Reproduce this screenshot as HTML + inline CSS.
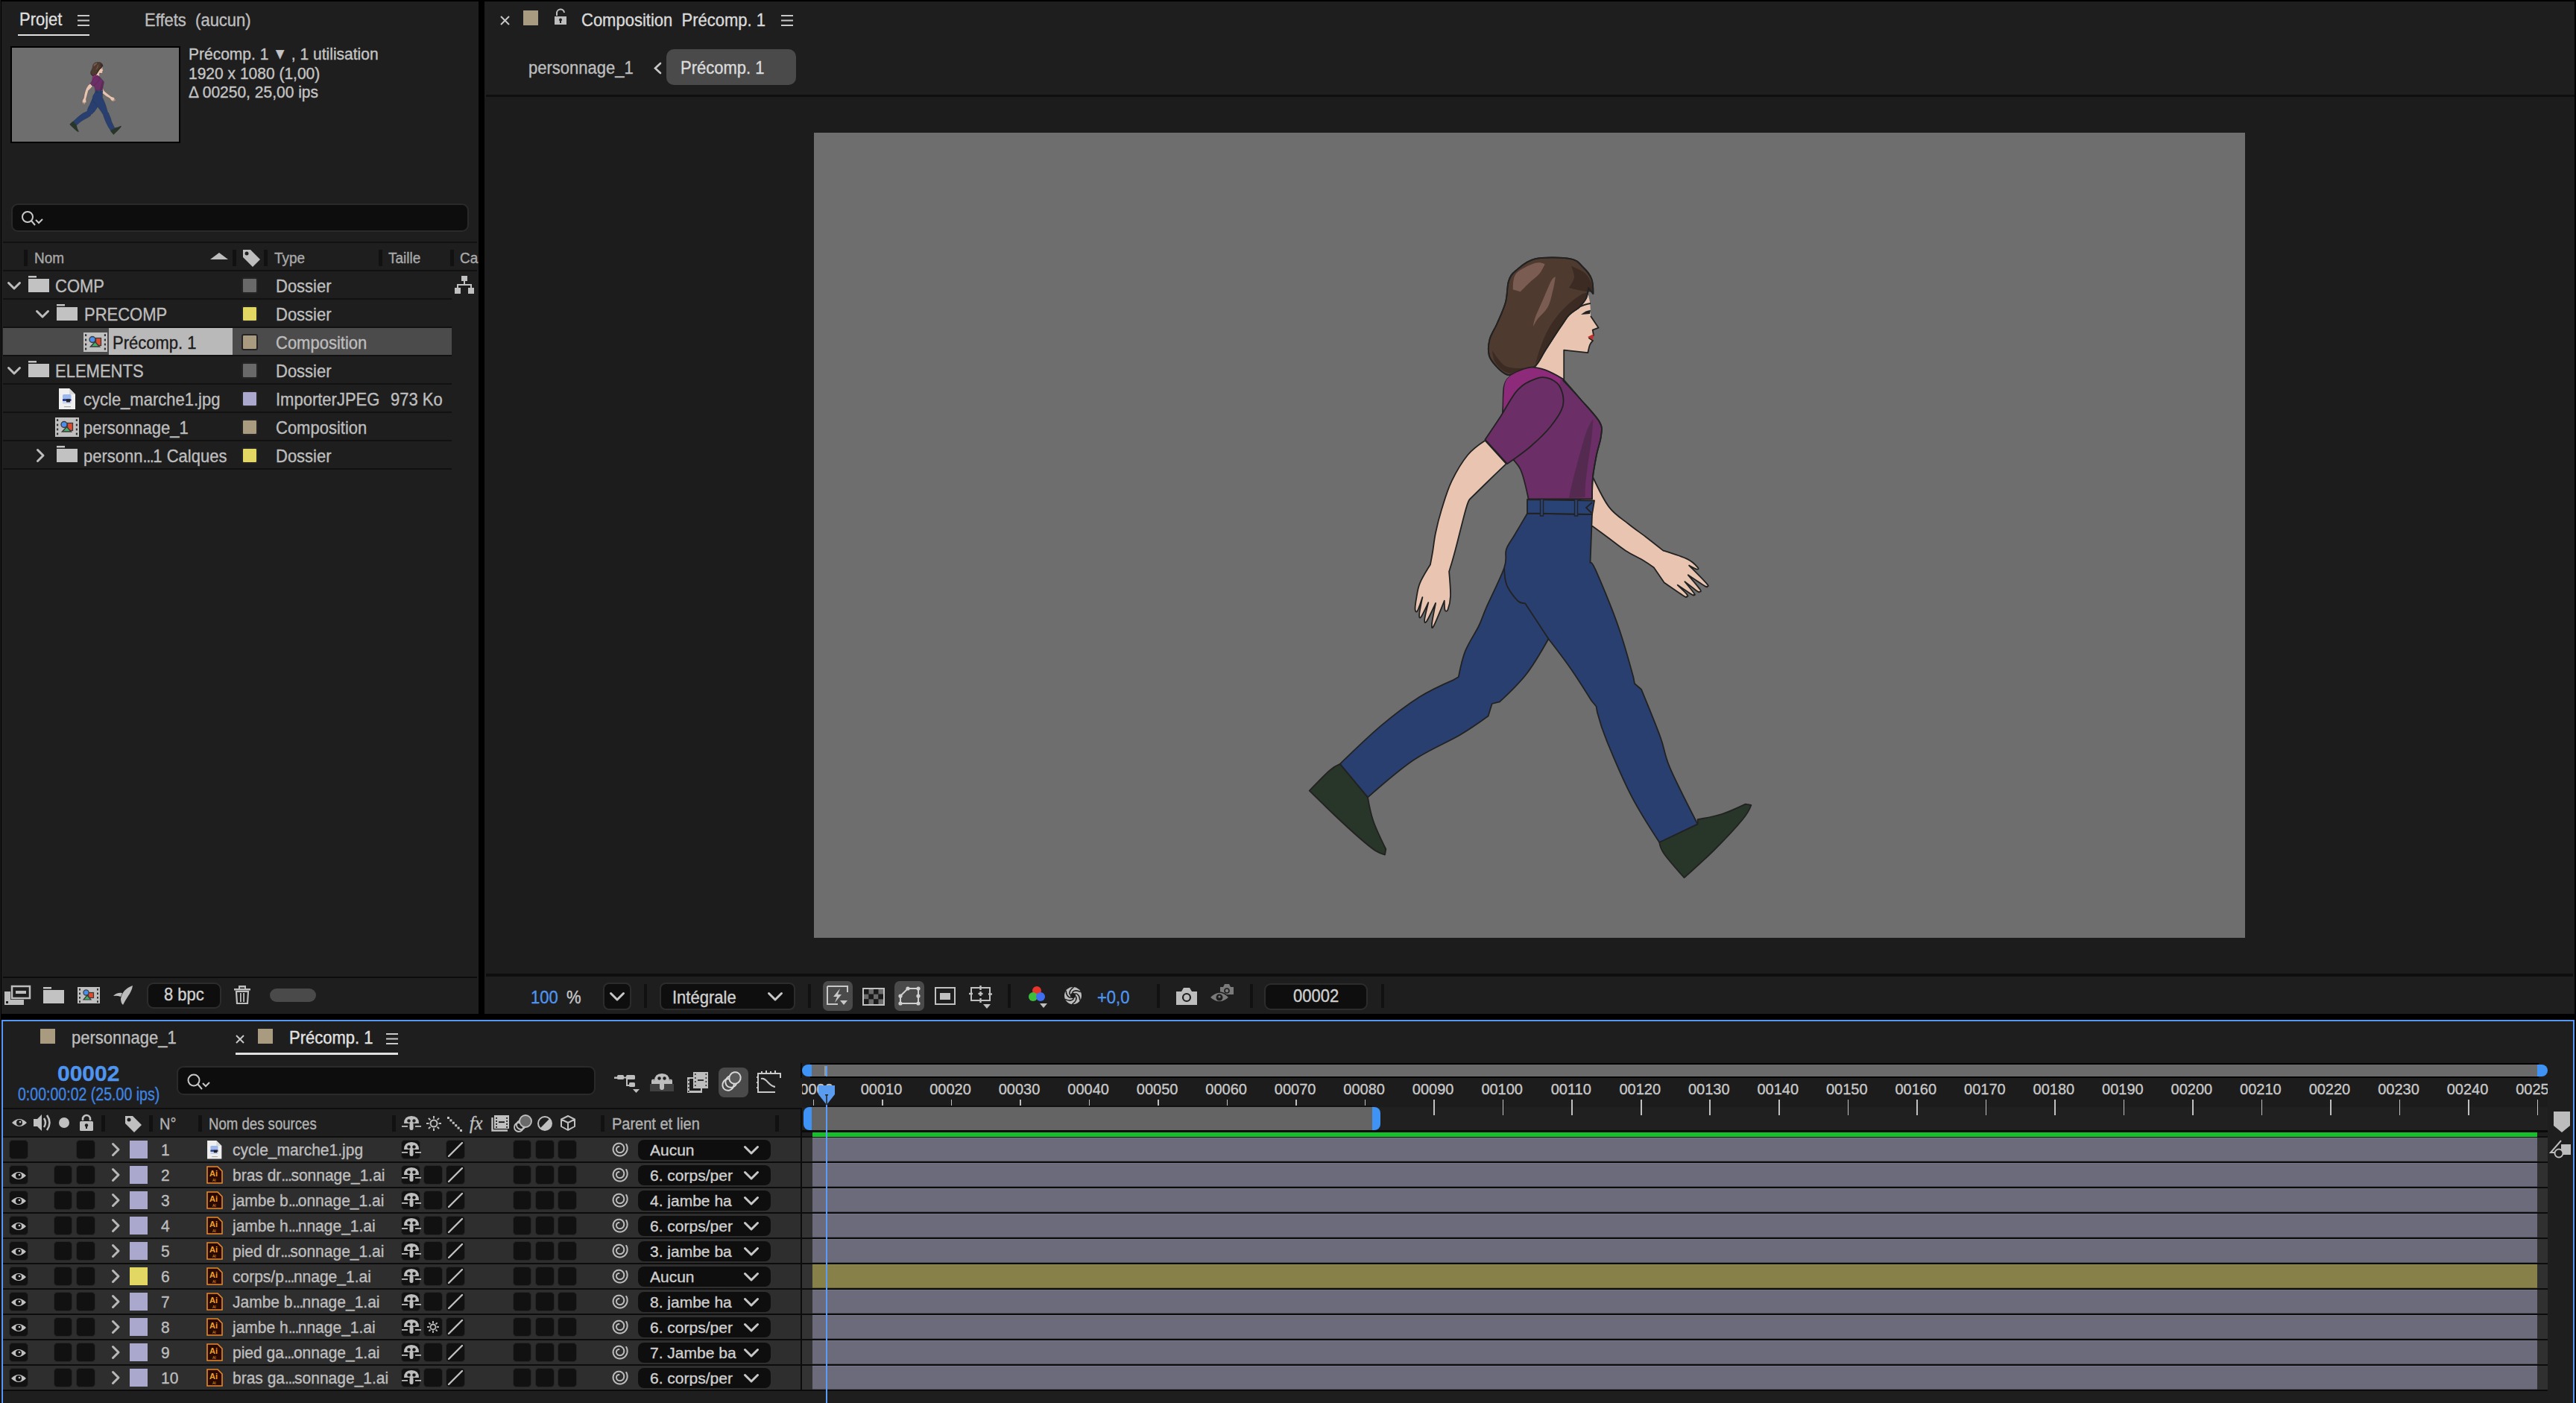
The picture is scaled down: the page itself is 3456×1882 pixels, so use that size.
<!DOCTYPE html>
<html><head><meta charset="utf-8">
<style>
*{margin:0;padding:0;box-sizing:border-box}
html,body{width:3456px;height:1882px;overflow:hidden;background:#000;font-family:"Liberation Sans",sans-serif}
.a{position:absolute}
.t{position:absolute;white-space:nowrap;line-height:1;color:#bdbdbd;font-size:22px;-webkit-text-stroke:0.35px currentColor}
svg{position:absolute;overflow:visible}
</style></head><body>

<div class="a" style="left:0px;top:0px;width:1px;height:1882px;background:#1c1c1c;"></div>
<div class="a" style="left:2px;top:2px;width:640px;height:1358px;background:#1e1e1e;"></div>
<div class="t" style="left:26px;top:16.38px;font-size:22px;color:#dedede;transform:scale(1.0,1.08);transform-origin:0 18.62px;">Projet</div>
<svg style="left:104px;top:20px" width="16" height="16" viewBox="0 0 16 16"><g stroke="#c8c8c8" stroke-width="2"><line x1="0" y1="1" x2="16" y2="1"/><line x1="0" y1="7.5" x2="16" y2="7.5"/><line x1="0" y1="14" x2="16" y2="14"/></g></svg>
<div class="a" style="left:24px;top:46px;width:96px;height:2px;background:#e0e0e0;"></div>
<div class="t" style="left:194px;top:17.38px;font-size:22px;color:#bdbdbd;transform:scale(1.0,1.08);transform-origin:0 18.62px;">Effets&nbsp; (aucun)</div>
<div class="a" style="left:14px;top:62px;width:228px;height:130px;background:#000;"></div>
<div class="a" style="left:16px;top:64px;width:224px;height:126px;background:#6e6e6e;"></div>
<svg style="left:16px;top:64px;overflow:hidden" width="224" height="126" viewBox="1092 178 1920 1080" preserveAspectRatio="none"><use href="#figg"/></svg>
<div class="t" style="left:253px;top:62.22px;font-size:21px;color:#c4c4c4;transform:scale(1.0,1.08);transform-origin:0 17.78px;">Précomp. 1 <span style="font-size:19px;position:relative;top:-1px">&#9660;</span> , 1 utilisation</div>
<div class="t" style="left:253px;top:87.72px;font-size:21px;color:#c4c4c4;transform:scale(1.0,1.08);transform-origin:0 17.78px;">1920 x 1080 (1,00)</div>
<div class="t" style="left:253px;top:113.22px;font-size:21px;color:#c4c4c4;transform:scale(1.0,1.08);transform-origin:0 17.78px;">&Delta; 00250, 25,00 ips</div>
<div class="a" style="left:15px;top:273px;width:614px;height:38px;background:#0d0d0d;border:2px solid #2a2a2a;border-radius:9px"></div>
<svg style="left:28px;top:282px" width="32" height="22" viewBox="0 0 32 22"><circle cx="9" cy="9" r="7" fill="none" stroke="#c8c8c8" stroke-width="2"/><line x1="14" y1="14" x2="19" y2="20" stroke="#c8c8c8" stroke-width="2"/><polyline points="20,13 24,17 29,12" fill="none" stroke="#c8c8c8" stroke-width="2"/></svg>
<div class="a" style="left:4px;top:324px;width:636px;height:2px;background:#111;"></div>
<div class="a" style="left:32px;top:335px;width:5px;height:22px;background:#111;"></div>
<div class="a" style="left:312px;top:335px;width:5px;height:22px;background:#111;"></div>
<div class="a" style="left:354px;top:335px;width:5px;height:22px;background:#111;"></div>
<div class="a" style="left:508px;top:335px;width:5px;height:22px;background:#111;"></div>
<div class="a" style="left:604px;top:335px;width:5px;height:22px;background:#111;"></div>
<div class="t" style="left:46px;top:336.92px;font-size:19px;color:#a9a9a9;transform:scale(1.0,1.08);transform-origin:0 16.08px;">Nom</div>
<svg style="left:282px;top:339px" width="24" height="9" viewBox="0 0 24 9"><polygon points="0,9 12,0 24,9" fill="#bdbdbd"/></svg>
<svg style="left:325px;top:334px" width="25" height="25" viewBox="0 0 25 25"><path d="M1 1 L11 1 L24 14 L14 24 L1 11 Z" fill="#bdbdbd"/><circle cx="6" cy="6" r="2.5" fill="#1e1e1e"/></svg>
<div class="t" style="left:368px;top:336.92px;font-size:19px;color:#a9a9a9;transform:scale(1.0,1.08);transform-origin:0 16.08px;">Type</div>
<div class="t" style="left:521px;top:336.92px;font-size:19px;color:#a9a9a9;transform:scale(1.0,1.08);transform-origin:0 16.08px;">Taille</div>
<div class="t" style="left:617px;top:336.92px;font-size:19px;color:#a9a9a9;transform:scale(1.0,1.08);transform-origin:0 16.08px;">Ca</div>
<div class="a" style="left:4px;top:362px;width:636px;height:2px;background:#111;"></div>
<svg style="left:10px;top:377.8px" width="18" height="10" viewBox="0 0 18 10"><polyline points="1.5,1.5 9.0,9 16.5,1.5" fill="none" stroke="#bdbdbd" stroke-width="3" stroke-linecap="round" stroke-linejoin="round"/></svg>
<svg style="left:38px;top:369.8px" width="28" height="22" viewBox="0 0 28 22"><rect x="0" y="0" width="11" height="2.5" fill="#c2c2c2"/><rect x="0" y="4" width="28" height="18" fill="#c2c2c2"/></svg>
<div class="t" style="left:74px;top:373.68px;font-size:22px;color:#bdbdbd;transform:scale(1.0,1.08);transform-origin:0 18.62px;">COMP</div>
<div class="a" style="left:324px;top:371.8px;width:22px;height:22px;background:#696969;border:2px solid #242424;border-radius:3px"></div>
<div class="t" style="left:370px;top:373.68px;font-size:22px;color:#bdbdbd;transform:scale(1.0,1.08);transform-origin:0 18.62px;">Dossier</div>
<div class="a" style="left:4px;top:399.8px;width:602px;height:2px;background:#111;"></div>
<svg style="left:48px;top:415.90000000000003px" width="18" height="10" viewBox="0 0 18 10"><polyline points="1.5,1.5 9.0,9 16.5,1.5" fill="none" stroke="#bdbdbd" stroke-width="3" stroke-linecap="round" stroke-linejoin="round"/></svg>
<svg style="left:76px;top:407.90000000000003px" width="28" height="22" viewBox="0 0 28 22"><rect x="0" y="0" width="11" height="2.5" fill="#c2c2c2"/><rect x="0" y="4" width="28" height="18" fill="#c2c2c2"/></svg>
<div class="t" style="left:113px;top:411.78px;font-size:22px;color:#bdbdbd;transform:scale(1.0,1.08);transform-origin:0 18.62px;">PRECOMP</div>
<div class="a" style="left:324px;top:409.90000000000003px;width:22px;height:22px;background:#e2d763;border:2px solid #242424;border-radius:3px"></div>
<div class="t" style="left:370px;top:411.78px;font-size:22px;color:#bdbdbd;transform:scale(1.0,1.08);transform-origin:0 18.62px;">Dossier</div>
<div class="a" style="left:4px;top:437.90000000000003px;width:602px;height:2px;background:#111;"></div>
<div class="a" style="left:4px;top:440px;width:602px;height:36px;background:#4b4b4b;"></div>
<div class="a" style="left:146px;top:440px;width:166px;height:36px;background:#b9b9b9;"></div>
<svg style="left:112px;top:446.0px" width="32" height="26" viewBox="0 0 32 26"><rect x="0" y="0" width="32" height="26" fill="#c0c0c0"/><rect x="2" y="2.2" width="2.2" height="2.8" fill="#333"/><rect x="27.8" y="2.2" width="2.2" height="2.8" fill="#333"/><rect x="2" y="8.6" width="2.2" height="2.8" fill="#333"/><rect x="27.8" y="8.6" width="2.2" height="2.8" fill="#333"/><rect x="2" y="14.6" width="2.2" height="2.8" fill="#333"/><rect x="27.8" y="14.6" width="2.2" height="2.8" fill="#333"/><rect x="2" y="20.6" width="2.2" height="2.8" fill="#333"/><rect x="27.8" y="20.6" width="2.2" height="2.8" fill="#333"/><rect x="16.5" y="7.5" width="7" height="10" fill="#e04a2f" stroke="#3a3a3a" stroke-width="1.3"/><circle cx="12" cy="9.5" r="4" fill="#4a8ef0" stroke="#3a3a3a" stroke-width="1.4"/><polygon points="9.5,19 15.5,12.5 21.5,19" fill="#44b06a" stroke="#3a3a3a" stroke-width="1.4"/></svg>
<div class="t" style="left:151px;top:449.88px;font-size:22px;color:#1c1c1c;transform:scale(1.0,1.08);transform-origin:0 18.62px;">Précomp. 1</div>
<div class="a" style="left:324px;top:448.0px;width:22px;height:22px;background:#a99b7f;border:2px solid #242424;border-radius:3px"></div>
<div class="t" style="left:370px;top:449.88px;font-size:22px;color:#bdbdbd;transform:scale(1.0,1.08);transform-origin:0 18.62px;">Composition</div>
<div class="a" style="left:4px;top:476.0px;width:602px;height:2px;background:#111;"></div>
<svg style="left:10px;top:492.1px" width="18" height="10" viewBox="0 0 18 10"><polyline points="1.5,1.5 9.0,9 16.5,1.5" fill="none" stroke="#bdbdbd" stroke-width="3" stroke-linecap="round" stroke-linejoin="round"/></svg>
<svg style="left:38px;top:484.1px" width="28" height="22" viewBox="0 0 28 22"><rect x="0" y="0" width="11" height="2.5" fill="#c2c2c2"/><rect x="0" y="4" width="28" height="18" fill="#c2c2c2"/></svg>
<div class="t" style="left:74px;top:487.98px;font-size:22px;color:#bdbdbd;transform:scale(1.0,1.08);transform-origin:0 18.62px;">ELEMENTS</div>
<div class="a" style="left:324px;top:486.1px;width:22px;height:22px;background:#696969;border:2px solid #242424;border-radius:3px"></div>
<div class="t" style="left:370px;top:487.98px;font-size:22px;color:#bdbdbd;transform:scale(1.0,1.08);transform-origin:0 18.62px;">Dossier</div>
<div class="a" style="left:4px;top:514.1px;width:602px;height:2px;background:#111;"></div>
<svg style="left:79px;top:521.2px" width="22.0" height="28.0" viewBox="0 0 22 28"><path d="M0 0 H14 L22 8 V28 H0 Z" fill="#efefef"/><path d="M14 0 V8 H22" fill="#d8d8d8"/><rect x="5" y="8" width="11.5" height="6" rx="1.5" fill="#9bb8ee"/><rect x="5" y="14" width="11.5" height="3" fill="#2d3f8a"/><rect x="5" y="17" width="11.5" height="3.5" fill="#c9d6ee"/><rect x="10" y="14.5" width="5" height="4" fill="#222"/><rect x="7" y="24" width="9" height="1.2" fill="#aaa"/></svg>
<div class="t" style="left:112px;top:526.08px;font-size:22px;color:#bdbdbd;transform:scale(1.0,1.08);transform-origin:0 18.62px;">cycle_marche1.jpg</div>
<div class="a" style="left:324px;top:524.2px;width:22px;height:22px;background:#aaa8cc;border:2px solid #242424;border-radius:3px"></div>
<div class="t" style="left:370px;top:526.08px;font-size:22px;color:#bdbdbd;transform:scale(1.0,1.08);transform-origin:0 18.62px;">ImporterJPEG</div>
<div class="t" style="left:524px;top:526.08px;font-size:22px;color:#bdbdbd;transform:scale(1.0,1.08);transform-origin:0 18.62px;">973 Ko</div>
<div class="a" style="left:4px;top:552.2px;width:602px;height:2px;background:#111;"></div>
<svg style="left:74px;top:560.3px" width="32" height="26" viewBox="0 0 32 26"><rect x="0" y="0" width="32" height="26" fill="#c0c0c0"/><rect x="2" y="2.2" width="2.2" height="2.8" fill="#333"/><rect x="27.8" y="2.2" width="2.2" height="2.8" fill="#333"/><rect x="2" y="8.6" width="2.2" height="2.8" fill="#333"/><rect x="27.8" y="8.6" width="2.2" height="2.8" fill="#333"/><rect x="2" y="14.6" width="2.2" height="2.8" fill="#333"/><rect x="27.8" y="14.6" width="2.2" height="2.8" fill="#333"/><rect x="2" y="20.6" width="2.2" height="2.8" fill="#333"/><rect x="27.8" y="20.6" width="2.2" height="2.8" fill="#333"/><rect x="16.5" y="7.5" width="7" height="10" fill="#e04a2f" stroke="#3a3a3a" stroke-width="1.3"/><circle cx="12" cy="9.5" r="4" fill="#4a8ef0" stroke="#3a3a3a" stroke-width="1.4"/><polygon points="9.5,19 15.5,12.5 21.5,19" fill="#44b06a" stroke="#3a3a3a" stroke-width="1.4"/></svg>
<div class="t" style="left:112px;top:564.18px;font-size:22px;color:#bdbdbd;transform:scale(1.0,1.08);transform-origin:0 18.62px;">personnage_1</div>
<div class="a" style="left:324px;top:562.3px;width:22px;height:22px;background:#a99b7f;border:2px solid #242424;border-radius:3px"></div>
<div class="t" style="left:370px;top:564.18px;font-size:22px;color:#bdbdbd;transform:scale(1.0,1.08);transform-origin:0 18.62px;">Composition</div>
<div class="a" style="left:4px;top:590.3px;width:602px;height:2px;background:#111;"></div>
<svg style="left:49px;top:602.4000000000001px" width="10" height="18" viewBox="0 0 10 18"><polyline points="1.5,1.5 9,9.0 1.5,16.5" fill="none" stroke="#bdbdbd" stroke-width="3" stroke-linecap="round" stroke-linejoin="round"/></svg>
<svg style="left:76px;top:598.4000000000001px" width="28" height="22" viewBox="0 0 28 22"><rect x="0" y="0" width="11" height="2.5" fill="#c2c2c2"/><rect x="0" y="4" width="28" height="18" fill="#c2c2c2"/></svg>
<div class="t" style="left:112px;top:602.28px;font-size:22px;color:#bdbdbd;transform:scale(1.0,1.08);transform-origin:0 18.62px;">personn<span style="letter-spacing:-1.5px">...</span>1 Calques</div>
<div class="a" style="left:324px;top:600.4000000000001px;width:22px;height:22px;background:#e2d763;border:2px solid #242424;border-radius:3px"></div>
<div class="t" style="left:370px;top:602.28px;font-size:22px;color:#bdbdbd;transform:scale(1.0,1.08);transform-origin:0 18.62px;">Dossier</div>
<div class="a" style="left:4px;top:628.4000000000001px;width:602px;height:2px;background:#111;"></div>
<svg style="left:610px;top:370px" width="26" height="24" viewBox="0 0 26 24"><rect x="9" y="0" width="8" height="7" fill="#c0c0c0"/><rect x="12" y="7" width="2" height="5" fill="#c0c0c0"/><rect x="3" y="11" width="20" height="2" fill="#c0c0c0"/><rect x="3" y="11" width="2" height="5" fill="#c0c0c0"/><rect x="21" y="11" width="2" height="5" fill="#c0c0c0"/><rect x="0" y="16" width="8" height="8" fill="#c0c0c0"/><rect x="18" y="16" width="8" height="8" fill="#c0c0c0"/></svg>
<div class="a" style="left:4px;top:1310px;width:636px;height:2px;background:#0c0c0c;"></div>
<svg style="left:6px;top:1322px" width="35" height="27" viewBox="0 0 35 27"><rect x="10" y="1" width="24" height="16" fill="none" stroke="#bdbdbd" stroke-width="2.5"/><rect x="15" y="7" width="14" height="4" fill="#bdbdbd"/><path d="M0 8 H8 V19 H26 V26 H0 Z" fill="#bdbdbd"/><rect x="2" y="21" width="3" height="3" fill="#1e1e1e"/></svg>
<svg style="left:58px;top:1324px" width="28" height="22" viewBox="0 0 28 22"><rect x="0" y="0" width="11" height="2.5" fill="#c2c2c2"/><rect x="0" y="4" width="28" height="18" fill="#c2c2c2"/></svg>
<svg style="left:104px;top:1324px" width="30" height="22" viewBox="0 0 30 22"><rect x="0" y="0" width="30" height="22" fill="#c0c0c0"/><rect x="2" y="2" width="2" height="2.6" fill="#333"/><rect x="26" y="2" width="2" height="2.6" fill="#333"/><rect x="2" y="7.5" width="2" height="2.6" fill="#333"/><rect x="26" y="7.5" width="2" height="2.6" fill="#333"/><rect x="2" y="13" width="2" height="2.6" fill="#333"/><rect x="26" y="13" width="2" height="2.6" fill="#333"/><rect x="2" y="18.3" width="2" height="2.6" fill="#333"/><rect x="26" y="18.3" width="2" height="2.6" fill="#333"/><rect x="6" y="2" width="18" height="18" fill="#c0c0c0"/><rect x="14.5" y="7.5" width="7" height="7" fill="#e04a2f" stroke="#3a3a3a" stroke-width="1.2"/><circle cx="11.5" cy="7.5" r="3.6" fill="#4a8ef0" stroke="#3a3a3a" stroke-width="1.2"/><polygon points="8,17 13,11 18,17" fill="#44b06a" stroke="#3a3a3a" stroke-width="1.2"/></svg>
<svg style="left:152px;top:1322px" width="26" height="26" viewBox="0 0 26 26"><path d="M26 0 Q12 5 10 18 Q10 23 13 26 Q16 20 20 14 Q25 7 26 0 Z" fill="#bdbdbd"/><path d="M0 14 Q5 9 12 10 L10 15 Q5 13 0 14 Z" fill="#bdbdbd"/></svg>
<div class="a" style="left:197px;top:1318px;width:100px;height:35px;background:#0e0e0e;border:2px solid #2c2c2c;border-radius:9px"></div>
<div class="t" style="left:220px;top:1324.38px;font-size:22px;color:#cfcfcf;transform:scale(1.0,1.08);transform-origin:0 18.62px;">8 bpc</div>
<svg style="left:314px;top:1322px" width="22" height="25" viewBox="0 0 22 25"><rect x="0" y="4" width="22" height="2.5" fill="#bdbdbd"/><rect x="7" y="0" width="8" height="2.5" fill="#bdbdbd"/><rect x="6" y="0" width="2" height="5" fill="#bdbdbd"/><rect x="14" y="0" width="2" height="5" fill="#bdbdbd"/><path d="M3 8 H19 L18 24 H4 Z" fill="none" stroke="#bdbdbd" stroke-width="2.2"/><rect x="8" y="10" width="1.8" height="12" fill="#bdbdbd"/><rect x="12.2" y="10" width="1.8" height="12" fill="#bdbdbd"/></svg>
<div class="a" style="left:362px;top:1326px;width:62px;height:18px;background:#4a4a4a;border-radius:9px"></div>
<div class="a" style="left:650px;top:2px;width:2804px;height:1358px;background:#1e1e1e;"></div>
<svg style="left:672px;top:22px" width="11" height="11" viewBox="0 0 11 11"><g stroke="#c8c8c8" stroke-width="2"><line x1="0" y1="0" x2="11" y2="11"/><line x1="11" y1="0" x2="0" y2="11"/></g></svg>
<div class="a" style="left:702px;top:14px;width:20px;height:20px;background:#a99b7f;"></div>
<svg style="left:744px;top:13px" width="17" height="20" viewBox="0 0 17 20"><path d="M3 8 V5 A5 5 0 0 1 13 4" fill="none" stroke="#bdbdbd" stroke-width="2"/><rect x="0" y="9" width="16" height="11" fill="#bdbdbd"/><circle cx="8" cy="13.5" r="2" fill="#1e1e1e"/><rect x="7" y="14" width="2" height="4" fill="#1e1e1e"/></svg>
<div class="t" style="left:780px;top:17.38px;font-size:22px;color:#dadada;transform:scale(1.0,1.08);transform-origin:0 18.62px;">Composition&nbsp; Précomp. 1</div>
<svg style="left:1048px;top:20px" width="16" height="16" viewBox="0 0 16 16"><g stroke="#c8c8c8" stroke-width="2"><line x1="0" y1="1" x2="16" y2="1"/><line x1="0" y1="7.5" x2="16" y2="7.5"/><line x1="0" y1="14" x2="16" y2="14"/></g></svg>
<div class="t" style="left:709px;top:81.38px;font-size:22px;color:#bdbdbd;transform:scale(1.0,1.08);transform-origin:0 18.62px;">personnage_1</div>
<svg style="left:877px;top:84px" width="11" height="15" viewBox="0 0 11 15"><polyline points="9,1 2,7.5 9,14" fill="none" stroke="#c8c8c8" stroke-width="2.6" stroke-linecap="round"/></svg>
<div class="a" style="left:894px;top:66px;width:174px;height:48px;background:#4a4a4a;border-radius:10px"></div>
<div class="t" style="left:913px;top:81.38px;font-size:22px;color:#dcdcdc;transform:scale(1.0,1.08);transform-origin:0 18.62px;">Précomp. 1</div>
<div class="a" style="left:652px;top:127px;width:2802px;height:3px;background:#0f0f0f;"></div>
<div class="a" style="left:650px;top:130px;width:2804px;height:1176px;background:#1c1c1c;"></div>
<div class="a" style="left:1092px;top:178px;width:1920px;height:1080px;background:#6e6e6e;"></div>
<svg style="left:1092px;top:178px;overflow:hidden" width="1920" height="1080" viewBox="1092 178 1920 1080"><g id="figg"><path d="M2120.0 630.0 C2120.0 630.0 2137.0 640.0 2137.0 640.0 C2137.0 640.0 2150.9 669.9 2158.9 680.4 C2166.9 690.9 2176.9 696.4 2185.0 703.0 C2193.1 709.6 2200.0 714.1 2207.7 720.0 C2215.4 725.9 2231.4 738.6 2231.4 738.6 C2231.4 738.6 2233.4 739.2 2233.4 739.2 C2233.4 739.2 2256.7 746.5 2264.1 750.1 C2271.5 753.7 2275.6 758.8 2277.6 761.0 C2279.6 763.2 2278.2 764.0 2276.3 763.6 C2274.4 763.2 2266.1 758.5 2266.1 758.5 C2266.1 758.5 2285.8 778.2 2289.8 782.9 C2293.9 787.5 2290.8 785.9 2290.4 786.4 C2290.0 786.9 2291.5 788.6 2287.2 786.1 C2282.9 783.6 2264.8 771.3 2264.8 771.3 C2264.8 771.3 2278.2 786.9 2280.8 790.6 C2283.4 794.4 2280.8 793.4 2280.2 793.8 C2279.6 794.2 2280.3 795.4 2277.0 793.1 C2273.7 790.9 2260.3 780.3 2260.3 780.3 C2260.3 780.3 2271.1 793.4 2273.1 796.3 C2275.1 799.2 2273.0 797.7 2272.5 797.9 C2272.0 798.1 2273.5 799.8 2269.9 797.6 C2266.3 795.4 2250.7 784.8 2250.7 784.8 C2250.7 784.8 2261.5 795.0 2263.5 797.6 C2265.5 800.2 2263.7 799.9 2262.9 800.2 C2262.2 800.5 2264.0 802.6 2259.0 799.5 C2254.0 796.4 2232.7 781.6 2232.7 781.6 C2232.7 781.6 2218.8 761.2 2218.8 761.2 C2218.8 761.2 2211.3 755.8 2205.0 752.0 C2198.7 748.2 2188.8 743.7 2181.0 738.7 C2173.2 733.7 2165.9 727.5 2158.5 722.0 C2151.1 716.5 2136.7 706.0 2136.7 706.0 C2136.7 706.0 2120.0 704.0 2120.0 704.0 C2120.0 704.0 2120.0 630.0 2120.0 630.0Z" fill="#e9c5b1" stroke="#222" stroke-width="1.8" stroke-linejoin="round"/><path d="M2049.2 688.5 C2049.2 688.5 2036.3 710.2 2031.6 718.3 C2026.9 726.4 2023.0 730.0 2020.8 737.2 C2018.5 744.4 2022.6 748.5 2018.1 761.6 C2013.6 774.7 1999.4 802.7 1993.7 815.8 C1988.0 828.9 1988.5 830.4 1983.8 840.0 C1979.1 849.6 1970.3 862.1 1965.8 873.4 C1961.3 884.7 1956.8 908.0 1956.8 908.0 C1956.8 908.0 1950.4 911.8 1950.4 911.8 C1950.4 911.8 1920.5 924.7 1904.2 935.0 C1888.0 945.3 1870.7 958.4 1852.9 973.4 C1835.2 988.4 1797.7 1024.8 1797.7 1024.8 C1797.7 1024.8 1835.0 1069.7 1835.0 1069.7 C1835.0 1069.7 1876.0 1033.5 1896.5 1019.6 C1917.0 1005.7 1941.4 996.1 1958.1 986.3 C1974.8 976.5 1996.6 960.6 1996.6 960.6 C1996.6 960.6 2001.7 944.0 2001.7 944.0 C2001.7 944.0 2012.0 941.4 2012.0 941.4 C2012.0 941.4 2037.1 918.1 2048.0 904.0 C2058.9 889.9 2077.5 857.0 2077.5 857.0 C2077.5 857.0 2097.4 882.7 2107.0 896.5 C2116.6 910.3 2135.2 940.0 2135.2 940.0 C2135.2 940.0 2141.6 947.8 2141.6 947.8 C2141.6 947.8 2142.9 955.5 2142.9 955.5 C2142.9 955.5 2148.0 975.2 2155.7 994.0 C2163.4 1012.8 2177.2 1045.7 2189.0 1068.4 C2200.8 1091.1 2226.3 1130.0 2226.3 1130.0 C2226.3 1130.0 2277.6 1105.6 2277.6 1105.6 C2277.6 1105.6 2248.7 1049.4 2240.4 1029.9 C2232.1 1010.4 2234.0 1006.3 2227.6 988.8 C2221.2 971.3 2202.0 924.7 2202.0 924.7 C2202.0 924.7 2193.0 917.0 2193.0 917.0 C2193.0 917.0 2191.6 909.3 2191.6 909.3 C2191.6 909.3 2179.4 863.9 2171.0 840.0 C2162.6 816.1 2147.4 779.9 2141.2 765.7 C2134.9 751.5 2133.5 754.8 2133.5 754.8 C2133.5 754.8 2136.0 690.0 2136.0 690.0 C2136.0 690.0 2049.2 688.5 2049.2 688.5Z" fill="#283f70" stroke="#222" stroke-width="1.8" stroke-linejoin="round"/><path d="M2018.1 761.6 C2018.1 761.6 2018.5 777.4 2021.5 784.8 C2024.5 792.2 2032.2 801.9 2036.3 806.0 C2040.4 810.1 2046.1 809.3 2046.1 809.3 C2046.1 809.3 2077.5 857.0 2077.5 857.0" fill="none" stroke="#222" stroke-width="1.8" stroke-linejoin="round"/><path d="M1797.7 1024.8 C1797.7 1024.8 1790.4 1027.7 1783.6 1033.7 C1776.8 1039.7 1756.7 1060.7 1756.7 1060.7 C1756.7 1060.7 1778.7 1082.3 1790.0 1093.0 C1801.3 1103.7 1815.5 1116.8 1824.7 1124.8 C1833.9 1132.8 1839.5 1137.4 1845.0 1141.0 C1850.5 1144.6 1858.0 1146.6 1858.0 1146.6 C1858.0 1146.6 1859.3 1139.0 1859.3 1139.0 C1859.3 1139.0 1846.6 1113.2 1842.6 1101.7 C1838.5 1090.2 1835.0 1069.7 1835.0 1069.7 C1835.0 1069.7 1797.7 1024.8 1797.7 1024.8Z" fill="#283629" stroke="#222" stroke-width="1.8" stroke-linejoin="round"/><path d="M2226.3 1130.0 C2226.3 1130.0 2227.1 1137.5 2232.7 1145.4 C2238.2 1153.3 2259.6 1177.4 2259.6 1177.4 C2259.6 1177.4 2286.9 1153.0 2300.0 1140.0 C2313.1 1127.0 2329.7 1109.2 2337.9 1099.2 C2346.1 1089.2 2349.4 1080.0 2349.4 1080.0 C2349.4 1080.0 2341.7 1078.6 2341.7 1078.6 C2341.7 1078.6 2320.7 1088.6 2310.0 1092.0 C2299.3 1095.4 2277.6 1099.2 2277.6 1099.2 C2277.6 1099.2 2277.6 1105.6 2277.6 1105.6 C2277.6 1105.6 2226.3 1130.0 2226.3 1130.0Z" fill="#283629" stroke="#222" stroke-width="1.8" stroke-linejoin="round"/><path d="M2048.0 512.0 C2048.0 512.0 2046.7 499.5 2052.0 490.0 C2057.3 480.5 2071.2 468.3 2080.0 455.0 C2088.8 441.7 2097.0 421.7 2105.0 410.0 C2113.0 398.3 2128.0 385.0 2128.0 385.0 C2128.0 385.0 2132.0 398.5 2133.0 405.0 C2134.0 411.5 2134.0 424.0 2134.0 424.0 C2134.0 424.0 2144.6 439.7 2144.6 439.7 C2144.6 439.7 2136.7 442.6 2136.7 442.6 C2136.7 442.6 2138.0 449.7 2138.0 449.7 C2138.0 449.7 2132.0 453.5 2132.0 453.5 C2132.0 453.5 2137.0 457.0 2137.0 457.0 C2137.0 457.0 2134.1 459.8 2133.0 462.5 C2131.9 465.2 2130.3 473.2 2130.3 473.2 C2130.3 473.2 2098.2 469.6 2098.2 469.6 C2098.2 469.6 2098.2 512.0 2098.2 512.0 C2098.2 512.0 2048.0 512.0 2048.0 512.0Z" fill="#e9c5b1" stroke="none"/><path d="M2134.0 424.0 C2134.0 424.0 2144.6 439.7 2144.6 439.7 C2144.6 439.7 2136.7 442.6 2136.7 442.6 C2136.7 442.6 2138.0 449.7 2138.0 449.7 C2138.0 449.7 2132.0 453.5 2132.0 453.5 C2132.0 453.5 2137.0 457.0 2137.0 457.0 C2137.0 457.0 2134.1 459.8 2133.0 462.5 C2131.9 465.2 2130.3 473.2 2130.3 473.2 C2130.3 473.2 2098.2 469.6 2098.2 469.6 C2098.2 469.6 2098.2 512.0 2098.2 512.0" fill="none" stroke="#222" stroke-width="1.8" stroke-linejoin="round"/><path d="M2116 413 Q2126 408 2134 407" fill="none" stroke="#222" stroke-width="2"/><path d="M2121 422 Q2128 416 2134 416 L2133 421 Z" fill="#222"/><path d="M2130 452 L2138 448 L2137 456 Z" fill="#c0302a"/><path d="M2059.8 347.1 C2071.9 344.5 2096.1 345.2 2106.8 347.1 C2117.5 349.0 2119.2 354.0 2123.9 358.5 C2128.7 363.0 2133.1 368.3 2135.3 374.2 C2137.6 380.1 2137.4 394.1 2137.4 394.1 C2137.4 394.1 2131.0 386.0 2131.0 386.0 C2131.0 386.0 2130.2 395.5 2128.0 400.0 C2125.8 404.5 2118.0 413.0 2118.0 413.0 C2118.0 413.0 2108.5 419.1 2105.0 422.6 C2101.5 426.1 2100.1 429.3 2096.8 434.0 C2093.5 438.7 2089.4 444.8 2085.4 451.0 C2081.4 457.2 2077.1 464.1 2072.6 471.0 C2068.1 477.9 2064.7 487.4 2058.3 492.4 C2051.9 497.4 2040.2 499.3 2034.0 501.0 C2027.8 502.7 2025.8 504.1 2021.3 502.4 C2016.8 500.7 2010.9 495.3 2007.0 491.0 C2003.1 486.7 1999.2 482.7 1997.8 476.8 C1996.4 470.9 1996.7 462.5 1998.5 455.4 C2000.3 448.3 2004.9 442.3 2008.5 434.0 C2012.1 425.7 2017.3 415.0 2019.9 405.5 C2022.5 396.0 2021.7 384.1 2024.0 377.0 C2026.3 369.9 2028.0 367.8 2034.0 362.8 C2040.0 357.8 2047.7 349.7 2059.8 347.1Z" fill="#4e3a2f" stroke="#222" stroke-width="1.8" stroke-linejoin="round"/><path d="M2029.8 388.4 C2029.8 388.4 2029.0 372.9 2034.0 367.0 C2039.0 361.1 2053.4 354.9 2059.8 352.8 C2066.2 350.7 2072.6 354.2 2072.6 354.2 C2072.6 354.2 2069.1 362.7 2065.5 367.0 C2061.9 371.3 2055.3 375.9 2051.0 380.0 C2046.7 384.1 2039.8 391.3 2039.8 391.3 C2039.8 391.3 2029.8 388.4 2029.8 388.4Z" fill="#7b5c52"/><path d="M2086.8 371.3 C2086.8 371.3 2085.7 380.4 2084.0 387.0 C2082.3 393.6 2080.5 404.3 2076.9 411.2 C2073.3 418.1 2065.9 423.8 2062.6 428.3 C2059.3 432.8 2056.9 438.3 2056.9 438.3 C2056.9 438.3 2057.5 431.9 2059.8 425.5 C2062.2 419.1 2067.5 407.9 2071.0 399.8 C2074.5 391.7 2078.4 381.8 2081.0 377.0 C2083.6 372.2 2086.8 371.3 2086.8 371.3Z" fill="#7b5c52"/><path d="M2108.0 357.0 C2108.0 357.0 2121.5 362.2 2126.0 366.0 C2130.5 369.8 2133.3 375.7 2135.0 380.0 C2136.7 384.3 2136.0 392.0 2136.0 392.0 C2136.0 392.0 2127.2 391.0 2122.0 390.0 C2116.8 389.0 2105.0 386.0 2105.0 386.0 C2105.0 386.0 2111.5 376.8 2112.0 372.0 C2112.5 367.2 2108.0 357.0 2108.0 357.0Z" fill="#3b2b23"/><path d="M2131.0 392.0 C2131.0 392.0 2122.3 407.9 2118.0 413.0 C2113.7 418.1 2108.5 419.1 2105.0 422.6 C2101.5 426.1 2100.1 429.3 2096.8 434.0 C2093.5 438.7 2089.4 444.8 2085.4 451.0 C2081.4 457.2 2076.8 464.8 2072.6 471.0 C2068.4 477.2 2060.0 488.0 2060.0 488.0 C2060.0 488.0 2063.7 474.7 2066.0 468.0 C2068.3 461.3 2070.7 454.7 2074.0 448.0 C2077.3 441.3 2081.3 434.3 2086.0 428.0 C2090.7 421.7 2096.3 415.3 2102.0 410.0 C2107.7 404.7 2115.2 399.0 2120.0 396.0 C2124.8 393.0 2131.0 392.0 2131.0 392.0Z" fill="#3b2b23"/><path d="M2002.0 470.0 C2002.0 470.0 2003.0 481.2 2006.0 486.0 C2009.0 490.8 2015.0 496.7 2020.0 499.0 C2025.0 501.3 2029.7 501.3 2036.0 500.0 C2042.3 498.7 2058.0 491.0 2058.0 491.0 C2058.0 491.0 2046.0 493.8 2040.0 494.0 C2034.0 494.2 2026.7 493.7 2022.0 492.0 C2017.3 490.3 2015.3 487.7 2012.0 484.0 C2008.7 480.3 2002.0 470.0 2002.0 470.0Z" fill="#3b2b23"/><path d="M2059.8 347.1 C2071.9 344.5 2096.1 345.2 2106.8 347.1 C2117.5 349.0 2119.2 354.0 2123.9 358.5 C2128.7 363.0 2133.1 368.3 2135.3 374.2 C2137.6 380.1 2137.4 394.1 2137.4 394.1 C2137.4 394.1 2131.0 386.0 2131.0 386.0 C2131.0 386.0 2130.2 395.5 2128.0 400.0 C2125.8 404.5 2118.0 413.0 2118.0 413.0 C2118.0 413.0 2108.5 419.1 2105.0 422.6 C2101.5 426.1 2100.1 429.3 2096.8 434.0 C2093.5 438.7 2089.4 444.8 2085.4 451.0 C2081.4 457.2 2077.1 464.1 2072.6 471.0 C2068.1 477.9 2064.7 487.4 2058.3 492.4 C2051.9 497.4 2040.2 499.3 2034.0 501.0 C2027.8 502.7 2025.8 504.1 2021.3 502.4 C2016.8 500.7 2010.9 495.3 2007.0 491.0 C2003.1 486.7 1999.2 482.7 1997.8 476.8 C1996.4 470.9 1996.7 462.5 1998.5 455.4 C2000.3 448.3 2004.9 442.3 2008.5 434.0 C2012.1 425.7 2017.3 415.0 2019.9 405.5 C2022.5 396.0 2021.7 384.1 2024.0 377.0 C2026.3 369.9 2028.0 367.8 2034.0 362.8 C2040.0 357.8 2047.7 349.7 2059.8 347.1Z" fill="none" stroke="#222" stroke-width="1.8" stroke-linejoin="round"/><path d="M2015.0 570.0 C2015.0 570.0 2015.9 553.9 2016.4 545.0 C2016.9 536.1 2016.2 523.7 2018.2 516.7 C2020.2 509.7 2022.7 507.0 2028.4 503.0 C2034.1 499.0 2045.0 493.9 2052.4 492.8 C2059.8 491.7 2065.5 493.6 2072.9 496.2 C2080.3 498.8 2096.8 508.2 2096.8 508.2 C2096.8 508.2 2111.8 525.4 2120.0 535.0 C2128.2 544.6 2141.3 557.7 2146.0 566.0 C2150.7 574.3 2148.7 577.7 2148.0 585.0 C2147.3 592.3 2143.8 600.8 2142.0 610.0 C2140.2 619.2 2138.0 630.1 2137.0 640.0 C2136.0 649.9 2136.0 669.5 2136.0 669.5 C2136.0 669.5 2050.6 669.5 2050.6 669.5 C2050.6 669.5 2044.8 640.8 2040.0 630.0 C2035.2 619.2 2026.2 615.0 2022.0 605.0 C2017.8 595.0 2015.0 570.0 2015.0 570.0Z" fill="#6b2e66" stroke="#222" stroke-width="1.8" stroke-linejoin="round"/><path d="M2137.5 562.0 C2137.5 562.0 2136.2 579.5 2135.0 590.0 C2133.8 600.5 2131.3 615.0 2130.0 625.0 C2128.7 635.0 2127.6 643.0 2127.0 650.0 C2126.4 657.0 2126.5 667.0 2126.5 667.0 C2126.5 667.0 2105.0 668.0 2105.0 668.0 C2105.0 668.0 2107.2 656.3 2110.0 645.0 C2112.8 633.7 2118.7 611.7 2122.0 600.0 C2125.3 588.3 2127.4 581.3 2130.0 575.0 C2132.6 568.7 2137.5 562.0 2137.5 562.0Z" fill="#552a50"/><path d="M2017.0 560.0 C2017.0 560.0 2017.0 538.0 2017.5 530.0 C2018.0 522.0 2017.9 516.7 2020.0 512.0 C2022.1 507.3 2024.6 505.0 2030.0 502.0 C2035.4 499.0 2045.2 494.8 2052.4 494.0 C2059.6 493.2 2066.0 495.2 2072.9 497.5 C2079.8 499.8 2094.0 508.0 2094.0 508.0 C2094.0 508.0 2092.0 520.0 2092.0 520.0 C2092.0 520.0 2084.6 511.4 2079.7 509.5 C2074.8 507.6 2069.7 506.2 2062.6 508.5 C2055.5 510.8 2043.8 516.4 2037.0 523.0 C2030.2 529.6 2022.0 548.0 2022.0 548.0 C2022.0 548.0 2017.0 560.0 2017.0 560.0Z" fill="#8d2a7a"/><path d="M2096.6 509.8 C2096.6 509.8 2111.8 525.6 2120.0 535.0 C2128.2 544.4 2141.3 557.7 2146.0 566.0 C2150.7 574.3 2148.7 577.7 2148.0 585.0 C2147.3 592.3 2143.8 600.8 2142.0 610.0 C2140.2 619.2 2138.0 630.1 2137.0 640.0 C2136.0 649.9 2136.0 669.5 2136.0 669.5" fill="none" stroke="#222" stroke-width="1.8" stroke-linejoin="round"/><path d="M2049 670 L2139 671.5 L2136 690 L2049 688.5 Z" fill="#2a4377" stroke="#222" stroke-width="1.8" stroke-linejoin="round"/><path d="M2066.5 670 V692 H2070.5 V670 M2112.5 670.5 V692 H2116.5 V670.5" fill="#2a4377" stroke="#222" stroke-width="1.4"/><path d="M2136 674 L2128 681 L2135 688" fill="none" stroke="#222" stroke-width="1.8"/><path d="M1992.4 591.0 C1992.4 591.0 1976.9 601.0 1969.4 610.0 C1962.0 619.0 1953.6 633.0 1947.7 645.2 C1941.8 657.4 1937.8 671.4 1934.2 683.0 C1930.6 694.6 1928.0 705.5 1926.0 715.0 C1924.0 724.5 1923.3 733.0 1922.1 740.0 C1920.9 747.0 1919.0 757.2 1919.0 757.2 C1919.0 757.2 1908.0 774.7 1904.9 782.3 C1901.8 789.9 1901.2 796.8 1900.2 802.7 C1899.2 808.6 1898.3 814.9 1898.6 817.6 C1898.9 820.4 1900.2 822.0 1901.8 819.2 C1903.4 816.5 1908.4 801.1 1908.4 801.1 C1908.4 801.1 1904.3 820.4 1904.1 824.7 C1903.8 829.0 1904.9 829.8 1906.9 827.0 C1908.9 824.2 1916.3 808.2 1916.3 808.2 C1916.3 808.2 1911.5 827.2 1911.2 831.3 C1910.9 835.4 1911.8 836.6 1914.3 832.9 C1916.8 829.2 1926.1 809.0 1926.1 809.0 C1926.1 809.0 1921.4 832.2 1921.0 837.2 C1920.6 842.2 1920.9 844.4 1923.7 839.2 C1926.5 834.0 1937.8 805.8 1937.8 805.8 C1937.8 805.8 1937.8 816.4 1938.6 818.4 C1939.4 820.4 1941.3 820.7 1942.5 817.6 C1943.7 814.5 1945.7 808.1 1946.0 799.6 C1946.3 791.1 1944.1 766.7 1944.1 766.7 C1944.1 766.7 1948.2 754.0 1951.9 740.0 C1955.7 726.0 1963.2 694.8 1966.6 683.0 C1969.9 671.2 1972.0 669.5 1972.0 669.5 C1972.0 669.5 1986.9 654.9 1995.0 647.0 C2003.1 639.1 2020.8 622.2 2020.8 622.2 C2020.8 622.2 1992.4 591.0 1992.4 591.0Z" fill="#e9c5b1" stroke="#222" stroke-width="1.8" stroke-linejoin="round"/><path d="M1992.4 589.7 C1992.4 589.7 2005.6 570.3 2013.0 559.0 C2020.4 547.7 2028.7 530.6 2037.0 522.0 C2045.3 513.4 2055.5 509.6 2062.6 507.3 C2069.7 505.0 2074.6 506.1 2079.7 508.2 C2084.8 510.3 2090.6 513.9 2093.4 520.0 C2096.2 526.1 2098.8 536.3 2096.6 545.0 C2094.4 553.7 2087.6 563.0 2080.4 572.0 C2073.2 581.0 2063.0 590.6 2053.3 599.0 C2043.6 607.4 2022.0 622.2 2022.0 622.2 C2022.0 622.2 1992.4 589.7 1992.4 589.7Z" fill="#6b2e66" stroke="#222" stroke-width="1.8" stroke-linejoin="round"/></g></svg>
<div class="a" style="left:652px;top:1306px;width:2800px;height:4px;background:#0e0e0e;"></div>
<div class="t" style="left:712px;top:1328.38px;font-size:22px;color:#4f95f0;transform:scale(1.0,1.08);transform-origin:0 18.62px;">100</div>
<div class="t" style="left:760px;top:1328.38px;font-size:22px;color:#c8c8c8;transform:scale(1.0,1.08);transform-origin:0 18.62px;">%</div>
<div class="a" style="left:809px;top:1318px;width:38px;height:37px;background:#0e0e0e;border:2px solid #2c2c2c;border-radius:8px"></div>
<svg style="left:818px;top:1331px" width="20" height="11" viewBox="0 0 20 11"><polyline points="1.5,1.5 10.0,10 18.5,1.5" fill="none" stroke="#c8c8c8" stroke-width="3" stroke-linecap="round" stroke-linejoin="round"/></svg>
<div class="a" style="left:864px;top:1320px;width:4px;height:32px;background:#111;"></div>
<div class="a" style="left:885px;top:1318px;width:182px;height:37px;background:#0e0e0e;border:2px solid #2c2c2c;border-radius:8px"></div>
<div class="t" style="left:902px;top:1328.38px;font-size:22px;color:#d0d0d0;transform:scale(1.0,1.08);transform-origin:0 18.62px;">Intégrale</div>
<svg style="left:1030px;top:1331px" width="20" height="11" viewBox="0 0 20 11"><polyline points="1.5,1.5 10.0,10 18.5,1.5" fill="none" stroke="#c8c8c8" stroke-width="3" stroke-linecap="round" stroke-linejoin="round"/></svg>
<div class="a" style="left:1084px;top:1320px;width:4px;height:32px;background:#111;"></div>
<div class="a" style="left:1104px;top:1316px;width:40px;height:40px;background:#4a4a4a;border-radius:7px"></div>
<svg style="left:1110px;top:1323px" width="28" height="25" viewBox="0 0 28 25"><path d="M0 0 H27 V8 M0 0 V24 H14" fill="none" stroke="#c8c8c8" stroke-width="2"/><path d="M17 3 L8 14 H13 L10 22 L19 11 H14 Z" fill="#c8c8c8"/><polygon points="17,19 27,19 22,25" fill="#c8c8c8"/></svg>
<svg style="left:1158px;top:1326px" width="28" height="22" viewBox="0 0 28 22"><rect x="1.0" y="1.0" width="6.5" height="6.7" fill="#1a1a1a"/><rect x="7.5" y="1.0" width="6.5" height="6.7" fill="#6a6a6a"/><rect x="14.0" y="1.0" width="6.5" height="6.7" fill="#1a1a1a"/><rect x="20.5" y="1.0" width="6.5" height="6.7" fill="#6a6a6a"/><rect x="1.0" y="7.7" width="6.5" height="6.7" fill="#6a6a6a"/><rect x="7.5" y="7.7" width="6.5" height="6.7" fill="#1a1a1a"/><rect x="14.0" y="7.7" width="6.5" height="6.7" fill="#6a6a6a"/><rect x="20.5" y="7.7" width="6.5" height="6.7" fill="#1a1a1a"/><rect x="1.0" y="14.4" width="6.5" height="6.7" fill="#1a1a1a"/><rect x="7.5" y="14.4" width="6.5" height="6.7" fill="#6a6a6a"/><rect x="14.0" y="14.4" width="6.5" height="6.7" fill="#1a1a1a"/><rect x="20.5" y="14.4" width="6.5" height="6.7" fill="#6a6a6a"/><rect x="0" y="0" width="28" height="22" fill="none" stroke="#c0c0c0" stroke-width="2"/></svg>
<div class="a" style="left:1200px;top:1316px;width:40px;height:40px;background:#4a4a4a;border-radius:7px"></div>
<svg style="left:1206px;top:1324px" width="28" height="24" viewBox="0 0 28 24"><path d="M2 12 L12 2 H26 V22 H2 Z" fill="none" stroke="#d0d0d0" stroke-width="2"/><circle cx="2" cy="12" r="2.6" fill="#d0d0d0"/><circle cx="12" cy="2" r="2.6" fill="#d0d0d0"/><circle cx="26" cy="2" r="2.6" fill="#d0d0d0"/><circle cx="26" cy="22" r="2.6" fill="#d0d0d0"/><circle cx="2" cy="22" r="2.6" fill="#d0d0d0"/><circle cx="26" cy="12" r="2.6" fill="#d0d0d0"/></svg>
<svg style="left:1254px;top:1324px" width="28" height="24" viewBox="0 0 28 24"><rect x="1" y="1" width="26" height="22" fill="none" stroke="#c0c0c0" stroke-width="2"/><rect x="7" y="8" width="14" height="9" fill="#c0c0c0"/></svg>
<svg style="left:1300px;top:1322px" width="31" height="31" viewBox="0 0 31 31"><rect x="3" y="3" width="25" height="17" fill="none" stroke="#c0c0c0" stroke-width="2"/><g stroke="#c0c0c0" stroke-width="2.4"><line x1="15.5" y1="0" x2="15.5" y2="6"/><line x1="15.5" y1="17" x2="15.5" y2="23"/><line x1="0" y1="11" x2="5" y2="11"/><line x1="26" y1="11.5" x2="31" y2="11.5"/><line x1="15.5" y1="8" x2="15.5" y2="14"/><line x1="12.5" y1="11" x2="18.5" y2="11"/></g><polygon points="19,25 29,25 24,31" fill="#c0c0c0"/></svg>
<div class="a" style="left:1352px;top:1320px;width:4px;height:32px;background:#111;"></div>
<svg style="left:1380px;top:1323px" width="25" height="29" viewBox="0 0 25 29"><circle cx="11" cy="6" r="6" fill="#e8352b"/><circle cx="6" cy="14" r="6" fill="#3cbe3c"/><circle cx="16" cy="14" r="6" fill="#3f6ef0"/><polygon points="15,23 25,23 20,29" fill="#c0c0c0"/></svg>
<svg style="left:1427px;top:1323px" width="25" height="25" viewBox="0 0 25 25"><circle cx="12.5" cy="12.5" r="11.5" fill="#bdbdbd"/><path d="M16.56 13.59 Q18.86 18.86 11.50 23.96" fill="none" stroke="#1e1e1e" stroke-width="1.6"/><path d="M13.59 16.56 Q10.17 21.19 2.08 17.36" fill="none" stroke="#1e1e1e" stroke-width="1.6"/><path d="M9.53 15.47 Q3.81 14.83 3.08 5.90" fill="none" stroke="#1e1e1e" stroke-width="1.6"/><path d="M8.44 11.41 Q6.14 6.14 13.50 1.04" fill="none" stroke="#1e1e1e" stroke-width="1.6"/><path d="M11.41 8.44 Q14.83 3.81 22.92 7.64" fill="none" stroke="#1e1e1e" stroke-width="1.6"/><path d="M15.47 9.53 Q21.19 10.17 21.92 19.10" fill="none" stroke="#1e1e1e" stroke-width="1.6"/><polygon points="16.56,13.59 13.59,16.56 9.53,15.47 8.44,11.41 11.41,8.44 15.47,9.53" fill="#1e1e1e"/></svg>
<div class="t" style="left:1472px;top:1328.38px;font-size:22px;color:#4f95f0;transform:scale(1.0,1.08);transform-origin:0 18.62px;">+0,0</div>
<div class="a" style="left:1552px;top:1320px;width:4px;height:32px;background:#111;"></div>
<svg style="left:1578px;top:1325px" width="28" height="23" viewBox="0 0 28 23"><path d="M0 5 H7 L10 0 H18 L21 5 H28 V23 H0 Z" fill="#bdbdbd"/><circle cx="14" cy="13" r="5" fill="none" stroke="#1e1e1e" stroke-width="2.2"/></svg>
<svg style="left:1623px;top:1320px" width="32" height="30" viewBox="0 0 32 30"><path d="M14 4 H18 L20 0 H26 L28 4 H32 V14 H14 Z" fill="#7a7a7a"/><circle cx="23" cy="9" r="3" fill="none" stroke="#1e1e1e" stroke-width="1.6"/><path d="M0 18 Q13 4 26 18 Q13 30 0 18 Z" fill="#7a7a7a" stroke="#1e1e1e" stroke-width="1.5"/><circle cx="13" cy="18" r="4.5" fill="#1e1e1e"/><circle cx="13" cy="17" r="1.6" fill="#7a7a7a"/></svg>
<div class="a" style="left:1677px;top:1320px;width:4px;height:32px;background:#111;"></div>
<div class="a" style="left:1696px;top:1319px;width:139px;height:36px;background:#0e0e0e;border:2px solid #2c2c2c;border-radius:9px"></div>
<div class="t" style="left:1735px;top:1326.38px;font-size:22px;color:#d0d0d0;transform:scale(1.0,1.08);transform-origin:0 18.62px;">00002</div>
<div class="a" style="left:1853px;top:1320px;width:4px;height:32px;background:#111;"></div>
<div class="a" style="left:2px;top:1368px;width:3452px;height:514px;background:#5598f5;"></div>
<div class="a" style="left:4px;top:1370px;width:3447.5px;height:512px;background:#1e1e1e;"></div>
<div class="a" style="left:54px;top:1380px;width:20px;height:20px;background:#a99b7f;"></div>
<div class="t" style="left:96px;top:1382.38px;font-size:22px;color:#bdbdbd;transform:scale(1.0,1.08);transform-origin:0 18.62px;">personnage_1</div>
<svg style="left:317px;top:1389px" width="10" height="10" viewBox="0 0 10 10"><g stroke="#c8c8c8" stroke-width="2"><line x1="0" y1="0" x2="10" y2="10"/><line x1="10" y1="0" x2="0" y2="10"/></g></svg>
<div class="a" style="left:346px;top:1380px;width:20px;height:20px;background:#a99b7f;"></div>
<div class="t" style="left:388px;top:1382.38px;font-size:22px;color:#e2e2e2;transform:scale(1.0,1.08);transform-origin:0 18.62px;">Précomp. 1</div>
<svg style="left:518px;top:1386px" width="16" height="16" viewBox="0 0 16 16"><g stroke="#c8c8c8" stroke-width="2"><line x1="0" y1="1" x2="16" y2="1"/><line x1="0" y1="7.5" x2="16" y2="7.5"/><line x1="0" y1="14" x2="16" y2="14"/></g></svg>
<div class="a" style="left:316px;top:1412px;width:218px;height:2.5px;background:#e0e0e0;"></div>
<div class="t" style="left:77px;top:1424.61px;font-size:30px;color:#4f95f0;font-weight:bold">00002</div>
<div class="t" style="left:24px;top:1457.03px;font-size:23px;color:#3f84e0;transform:scale(0.85,1.08);transform-origin:0 19.47px;">0:00:00:02 (25.00 ips)</div>
<div class="a" style="left:237px;top:1430px;width:562px;height:39px;background:#0d0d0d;border:2px solid #2a2a2a;border-radius:9px"></div>
<svg style="left:251px;top:1440px" width="32" height="22" viewBox="0 0 32 22"><circle cx="9" cy="9" r="7.5" fill="none" stroke="#c8c8c8" stroke-width="2"/><line x1="14.5" y1="14.5" x2="20" y2="21" stroke="#c8c8c8" stroke-width="2"/><polyline points="21,13 25,17 30,12" fill="none" stroke="#c8c8c8" stroke-width="2"/></svg>
<svg style="left:824px;top:1442px" width="34" height="24" viewBox="0 0 34 24"><rect x="0" y="2.5" width="4" height="2.5" fill="#bdbdbd"/><rect x="4" y="0" width="9" height="6" rx="1.5" fill="#bdbdbd"/><rect x="13" y="2.5" width="3" height="2" fill="#bdbdbd"/><rect x="16" y="0" width="12" height="6" rx="1.5" fill="#bdbdbd"/><rect x="16" y="2" width="2" height="13" fill="#bdbdbd"/><rect x="16" y="13" width="4" height="2" fill="#bdbdbd"/><rect x="20" y="10" width="8" height="6" rx="1.5" fill="#bdbdbd"/><polygon points="25,19 34,19 29.5,24" fill="#bdbdbd"/></svg>
<svg style="left:872px;top:1440px" width="32" height="24" viewBox="0 0 32 24"><path d="M6 10 Q6 0 16 0 Q26 0 26 10 Z" fill="#bdbdbd"/><path d="M3 10 Q3 8 6 9 M26 9 Q29 8 29 10" stroke="#bdbdbd" stroke-width="2" fill="none"/><rect x="0" y="14" width="32" height="10" fill="#404040"/><rect x="2" y="10" width="28" height="4" fill="#bdbdbd"/><circle cx="12.5" cy="6.5" r="2.2" fill="#1e1e1e"/><circle cx="19.5" cy="6.5" r="2.2" fill="#1e1e1e"/><rect x="13" y="9" width="6" height="13" rx="3" fill="#bdbdbd"/></svg>
<svg style="left:922px;top:1438px" width="28" height="28" viewBox="0 0 28 28"><rect x="0" y="7" width="20" height="21" fill="#bdbdbd"/><rect x="3" y="9" width="15" height="16" fill="#1e1e1e"/><rect x="8" y="0" width="20" height="22" fill="#bdbdbd"/><rect x="10" y="2" width="1.6" height="2" fill="#333"/><rect x="24.5" y="2" width="1.6" height="2" fill="#333"/><rect x="10" y="7" width="1.6" height="2" fill="#333"/><rect x="24.5" y="7" width="1.6" height="2" fill="#333"/><rect x="10" y="12" width="1.6" height="2" fill="#333"/><rect x="24.5" y="12" width="1.6" height="2" fill="#333"/><rect x="10" y="17" width="1.6" height="2" fill="#333"/><rect x="24.5" y="17" width="1.6" height="2" fill="#333"/><rect x="1" y="10" width="1.6" height="2" fill="#333"/><rect x="1" y="15" width="1.6" height="2" fill="#333"/><rect x="1" y="20" width="1.6" height="2" fill="#333"/><rect x="1" y="25" width="1.6" height="2" fill="#333"/><rect x="14" y="10" width="8" height="2" fill="#333"/></svg>
<div class="a" style="left:964px;top:1432px;width:40px;height:40px;background:#4a4a4a;border-radius:8px"></div>
<svg style="left:968px;top:1436px" width="28" height="30" viewBox="0 0 28 30"><ellipse cx="9" cy="19" rx="7.5" ry="8" fill="none" stroke="#d8d8d8" stroke-width="2" transform="rotate(35 9 19)"/><ellipse cx="13" cy="15" rx="7.5" ry="8" fill="none" stroke="#d8d8d8" stroke-width="2" transform="rotate(35 13 15)"/><ellipse cx="18" cy="10" rx="7.5" ry="8" fill="#5a5a5a" stroke="#d8d8d8" stroke-width="2" transform="rotate(35 18 10)"/></svg>
<svg style="left:1015px;top:1436px" width="34" height="30" viewBox="0 0 34 30"><rect x="2" y="4" width="30" height="25" fill="none" stroke="#c8c8c8" stroke-width="2"/><path d="M6 11 C14 9 16 22 26 22" fill="none" stroke="#c8c8c8" stroke-width="2"/><g stroke="#c8c8c8" stroke-width="2"><line x1="7" y1="1" x2="7" y2="4"/><line x1="13" y1="0" x2="13" y2="4"/><line x1="19" y1="1" x2="19" y2="4"/><line x1="25" y1="0" x2="25" y2="4"/><line x1="0" y1="9" x2="2" y2="9"/><line x1="0" y1="16" x2="2" y2="16"/><line x1="0" y1="23" x2="2" y2="23"/></g></svg>
<div class="a" style="left:4px;top:1486px;width:1070px;height:2px;background:#0e0e0e;"></div>
<svg style="left:16px;top:1498px" width="21" height="16" viewBox="0 0 21 16"><path d="M0 8 Q10 -2 20 8 Q10 18 0 8 Z" fill="#c0c0c0"/><circle cx="10" cy="8" r="4" fill="#1e1e1e"/><circle cx="11" cy="7" r="1.3" fill="#c0c0c0"/></svg>
<svg style="left:45px;top:1495px" width="24" height="22" viewBox="0 0 24 22"><path d="M0 6 H5 L11 0 V22 L5 16 H0 Z" fill="#c0c0c0"/><path d="M14 5 Q18 11 14 17 M18 1 Q25 11 18 21" fill="none" stroke="#c0c0c0" stroke-width="2.5"/></svg>
<svg style="left:79px;top:1499px" width="14" height="14" viewBox="0 0 14 14"><circle cx="7" cy="7" r="7" fill="#c0c0c0"/></svg>
<svg style="left:107px;top:1495px" width="18" height="22" viewBox="0 0 18 22"><path d="M4 8 V6 A5 5 0 0 1 14 6 V8" fill="none" stroke="#c0c0c0" stroke-width="2.6"/><rect x="0" y="9" width="18" height="13" rx="1.5" fill="#c0c0c0"/><circle cx="9" cy="14.5" r="2.2" fill="#1e1e1e"/><rect x="8" y="15" width="2" height="4" fill="#1e1e1e"/></svg>
<div class="a" style="left:136px;top:1496px;width:5px;height:22px;background:#111;"></div>
<div class="a" style="left:200px;top:1496px;width:5px;height:22px;background:#111;"></div>
<div class="a" style="left:266px;top:1496px;width:5px;height:22px;background:#111;"></div>
<div class="a" style="left:526px;top:1496px;width:5px;height:22px;background:#111;"></div>
<div class="a" style="left:806px;top:1496px;width:5px;height:22px;background:#111;"></div>
<div class="a" style="left:1040px;top:1496px;width:5px;height:22px;background:#111;"></div>
<svg style="left:167px;top:1496px" width="24" height="24" viewBox="0 0 24 24"><path d="M1 1 L11 1 L23 13 L13 23 L1 11 Z" fill="#c0c0c0"/><circle cx="6" cy="6" r="2.5" fill="#1e1e1e"/></svg>
<div class="t" style="left:214px;top:1498.07px;font-size:20px;color:#b0b0b0;transform:scale(1.0,1.08);transform-origin:0 16.93px;">N°</div>
<div class="t" style="left:280px;top:1498.07px;font-size:20px;color:#b0b0b0;transform:scale(0.93,1.08);transform-origin:0 16.93px;">Nom des sources</div>
<svg style="left:539px;top:1497px" width="26" height="20" viewBox="0 0 26 20"><path d="M3 10 Q3 0 13 0 Q23 0 23 10 Z" fill="#bdbdbd"/><circle cx="9.5" cy="6.5" r="2.2" fill="#1e1e1e"/><circle cx="16.5" cy="6.5" r="2.2" fill="#1e1e1e"/><rect x="10.5" y="9" width="5" height="10" rx="2.5" fill="#bdbdbd"/><rect x="0" y="13" width="8" height="1.8" fill="#bdbdbd"/><rect x="18" y="13" width="8" height="1.8" fill="#bdbdbd"/></svg>
<svg style="left:572px;top:1497px" width="20" height="20" viewBox="0 0 20 20"><circle cx="10" cy="10" r="4.5" fill="none" stroke="#c0c0c0" stroke-width="2"/><line x1="16.50" y1="10.00" x2="20.00" y2="10.00" stroke="#c0c0c0" stroke-width="2"/><line x1="14.60" y1="14.59" x2="17.07" y2="17.07" stroke="#c0c0c0" stroke-width="2"/><line x1="10.01" y1="16.50" x2="10.01" y2="20.00" stroke="#c0c0c0" stroke-width="2"/><line x1="5.41" y1="14.60" x2="2.94" y2="17.08" stroke="#c0c0c0" stroke-width="2"/><line x1="3.50" y1="10.01" x2="0.00" y2="10.02" stroke="#c0c0c0" stroke-width="2"/><line x1="5.39" y1="5.41" x2="2.91" y2="2.94" stroke="#c0c0c0" stroke-width="2"/><line x1="9.98" y1="3.50" x2="9.98" y2="0.00" stroke="#c0c0c0" stroke-width="2"/><line x1="14.58" y1="5.39" x2="17.05" y2="2.91" stroke="#c0c0c0" stroke-width="2"/></svg>
<svg style="left:600px;top:1498px" width="21" height="21" viewBox="0 0 21 21"><rect x="0.0" y="0.0" width="3" height="3" fill="#c0c0c0"/><rect x="3.4" y="3.4" width="3" height="3" fill="#c0c0c0"/><rect x="6.8" y="6.8" width="3" height="3" fill="#c0c0c0"/><rect x="10.2" y="10.2" width="3" height="3" fill="#c0c0c0"/><rect x="13.6" y="13.6" width="3" height="3" fill="#c0c0c0"/><rect x="17.0" y="17.0" width="3" height="3" fill="#c0c0c0"/></svg>
<div class="t" style="left:630px;top:1494.68px;font-size:24px;color:#c0c0c0;transform:scale(1.0,1.08);transform-origin:0 20.32px;font-family:&quot;Liberation Serif&quot;,serif"><i>fx</i></div>
<svg style="left:659px;top:1496px" width="24" height="24" viewBox="0 0 24 24"><path d="M1.5 3 V20.5 H22" fill="none" stroke="#c0c0c0" stroke-width="2.4"/><rect x="4" y="0" width="20" height="18" fill="#c0c0c0"/><rect x="6.2" y="3" width="1.8" height="1.8" fill="#111"/><rect x="6.2" y="7" width="1.8" height="1.8" fill="#111"/><rect x="6.2" y="11" width="1.8" height="1.8" fill="#111"/><rect x="6.2" y="15" width="1.8" height="1.8" fill="#111"/><rect x="20.2" y="3" width="1.8" height="1.8" fill="#111"/><rect x="20.2" y="7" width="1.8" height="1.8" fill="#111"/><rect x="20.2" y="11" width="1.8" height="1.8" fill="#111"/><rect x="20.2" y="15" width="1.8" height="1.8" fill="#111"/><rect x="10" y="8.3" width="8" height="1.8" fill="#111"/></svg>
<svg style="left:690px;top:1495px" width="24" height="24" viewBox="0 0 24 24"><circle cx="6" cy="17" r="6" fill="none" stroke="#c0c0c0" stroke-width="1.8"/><circle cx="9" cy="14" r="6" fill="none" stroke="#c0c0c0" stroke-width="1.8"/><circle cx="15" cy="9" r="8" fill="#6a6a6a" stroke="#c0c0c0" stroke-width="1.8"/></svg>
<svg style="left:721px;top:1497px" width="20" height="20" viewBox="0 0 20 20"><circle cx="10" cy="10" r="9" fill="none" stroke="#c0c0c0" stroke-width="2"/><path d="M16.4 3.6 A9 9 0 0 1 3.6 16.4 Z" fill="#c0c0c0"/></svg>
<svg style="left:753px;top:1497px" width="18" height="19" viewBox="0 0 18 19"><path d="M9 0 L18 4.5 V14 L9 19 L0 14 V4.5 Z M0 4.5 L9 9 L18 4.5 M9 9 V19" fill="none" stroke="#c0c0c0" stroke-width="2" stroke-linejoin="round"/></svg>
<div class="t" style="left:821px;top:1498.07px;font-size:20px;color:#b0b0b0;transform:scale(1.0,1.08);transform-origin:0 16.93px;">Parent et lien</div>
<div class="a" style="left:4px;top:1524px;width:3414px;height:2px;background:#0e0e0e;"></div>
<div class="a" style="left:1074px;top:1426px;width:2px;height:456px;background:#0c0c0c;"></div>
<div class="a" style="left:1087px;top:1426px;width:2319px;height:20px;background:#000;"></div>
<div class="a" style="left:1089px;top:1428px;width:2315px;height:16px;background:#6a6a6a;"></div>
<div class="a" style="left:1076px;top:1428px;width:13px;height:16px;background:#3e93f4;border-radius:8px 0 0 8px"></div>
<div class="a" style="left:3404px;top:1428px;width:14px;height:16px;background:#3e93f4;border-radius:0 8px 8px 0"></div>
<div class="a" style="left:1106px;top:1430px;width:2px;height:13px;background:#9a9a9a;"></div>
<div class="a" style="left:1108px;top:1430px;width:2px;height:14px;background:#5a9cf0;"></div>
<div class="a" style="left:1076px;top:1446px;width:2342px;height:39px;background:#1c1c1c;"></div>
<div class="a" style="left:1076px;top:1485px;width:2342px;height:33px;background:#202020;"></div>
<div class="a" style="left:1090.7px;top:1474.5px;width:1.6px;height:21px;background:#c0c0c0;"></div>
<div class="t" style="left:1030.00px;width:120px;text-align:center;top:1451.07px;font-size:20px;color:#c8c8c8">00000</div>
<div class="a" style="left:1183.22px;top:1474.5px;width:1.6px;height:21px;background:#c0c0c0;"></div>
<div class="t" style="left:1122.52px;width:120px;text-align:center;top:1451.07px;font-size:20px;color:#c8c8c8">00010</div>
<div class="a" style="left:1275.74px;top:1474.5px;width:1.6px;height:21px;background:#c0c0c0;"></div>
<div class="t" style="left:1215.04px;width:120px;text-align:center;top:1451.07px;font-size:20px;color:#c8c8c8">00020</div>
<div class="a" style="left:1368.26px;top:1474.5px;width:1.6px;height:21px;background:#c0c0c0;"></div>
<div class="t" style="left:1307.56px;width:120px;text-align:center;top:1451.07px;font-size:20px;color:#c8c8c8">00030</div>
<div class="a" style="left:1460.78px;top:1474.5px;width:1.6px;height:21px;background:#c0c0c0;"></div>
<div class="t" style="left:1400.08px;width:120px;text-align:center;top:1451.07px;font-size:20px;color:#c8c8c8">00040</div>
<div class="a" style="left:1553.3px;top:1474.5px;width:1.6px;height:21px;background:#c0c0c0;"></div>
<div class="t" style="left:1492.60px;width:120px;text-align:center;top:1451.07px;font-size:20px;color:#c8c8c8">00050</div>
<div class="a" style="left:1645.82px;top:1474.5px;width:1.6px;height:21px;background:#c0c0c0;"></div>
<div class="t" style="left:1585.12px;width:120px;text-align:center;top:1451.07px;font-size:20px;color:#c8c8c8">00060</div>
<div class="a" style="left:1738.3400000000001px;top:1474.5px;width:1.6px;height:21px;background:#c0c0c0;"></div>
<div class="t" style="left:1677.64px;width:120px;text-align:center;top:1451.07px;font-size:20px;color:#c8c8c8">00070</div>
<div class="a" style="left:1830.8600000000001px;top:1474.5px;width:1.6px;height:21px;background:#c0c0c0;"></div>
<div class="t" style="left:1770.16px;width:120px;text-align:center;top:1451.07px;font-size:20px;color:#c8c8c8">00080</div>
<div class="a" style="left:1923.38px;top:1474.5px;width:1.6px;height:21px;background:#c0c0c0;"></div>
<div class="t" style="left:1862.68px;width:120px;text-align:center;top:1451.07px;font-size:20px;color:#c8c8c8">00090</div>
<div class="a" style="left:2015.9px;top:1474.5px;width:1.6px;height:21px;background:#c0c0c0;"></div>
<div class="t" style="left:1955.20px;width:120px;text-align:center;top:1451.07px;font-size:20px;color:#c8c8c8">00100</div>
<div class="a" style="left:2108.42px;top:1474.5px;width:1.6px;height:21px;background:#c0c0c0;"></div>
<div class="t" style="left:2047.72px;width:120px;text-align:center;top:1451.07px;font-size:20px;color:#c8c8c8">00110</div>
<div class="a" style="left:2200.9399999999996px;top:1474.5px;width:1.6px;height:21px;background:#c0c0c0;"></div>
<div class="t" style="left:2140.24px;width:120px;text-align:center;top:1451.07px;font-size:20px;color:#c8c8c8">00120</div>
<div class="a" style="left:2293.46px;top:1474.5px;width:1.6px;height:21px;background:#c0c0c0;"></div>
<div class="t" style="left:2232.76px;width:120px;text-align:center;top:1451.07px;font-size:20px;color:#c8c8c8">00130</div>
<div class="a" style="left:2385.98px;top:1474.5px;width:1.6px;height:21px;background:#c0c0c0;"></div>
<div class="t" style="left:2325.28px;width:120px;text-align:center;top:1451.07px;font-size:20px;color:#c8c8c8">00140</div>
<div class="a" style="left:2478.5px;top:1474.5px;width:1.6px;height:21px;background:#c0c0c0;"></div>
<div class="t" style="left:2417.80px;width:120px;text-align:center;top:1451.07px;font-size:20px;color:#c8c8c8">00150</div>
<div class="a" style="left:2571.02px;top:1474.5px;width:1.6px;height:21px;background:#c0c0c0;"></div>
<div class="t" style="left:2510.32px;width:120px;text-align:center;top:1451.07px;font-size:20px;color:#c8c8c8">00160</div>
<div class="a" style="left:2663.54px;top:1474.5px;width:1.6px;height:21px;background:#c0c0c0;"></div>
<div class="t" style="left:2602.84px;width:120px;text-align:center;top:1451.07px;font-size:20px;color:#c8c8c8">00170</div>
<div class="a" style="left:2756.06px;top:1474.5px;width:1.6px;height:21px;background:#c0c0c0;"></div>
<div class="t" style="left:2695.36px;width:120px;text-align:center;top:1451.07px;font-size:20px;color:#c8c8c8">00180</div>
<div class="a" style="left:2848.58px;top:1474.5px;width:1.6px;height:21px;background:#c0c0c0;"></div>
<div class="t" style="left:2787.88px;width:120px;text-align:center;top:1451.07px;font-size:20px;color:#c8c8c8">00190</div>
<div class="a" style="left:2941.1px;top:1474.5px;width:1.6px;height:21px;background:#c0c0c0;"></div>
<div class="t" style="left:2880.40px;width:120px;text-align:center;top:1451.07px;font-size:20px;color:#c8c8c8">00200</div>
<div class="a" style="left:3033.62px;top:1474.5px;width:1.6px;height:21px;background:#c0c0c0;"></div>
<div class="t" style="left:2972.92px;width:120px;text-align:center;top:1451.07px;font-size:20px;color:#c8c8c8">00210</div>
<div class="a" style="left:3126.14px;top:1474.5px;width:1.6px;height:21px;background:#c0c0c0;"></div>
<div class="t" style="left:3065.44px;width:120px;text-align:center;top:1451.07px;font-size:20px;color:#c8c8c8">00220</div>
<div class="a" style="left:3218.66px;top:1474.5px;width:1.6px;height:21px;background:#c0c0c0;"></div>
<div class="t" style="left:3157.96px;width:120px;text-align:center;top:1451.07px;font-size:20px;color:#c8c8c8">00230</div>
<div class="a" style="left:3311.18px;top:1474.5px;width:1.6px;height:21px;background:#c0c0c0;"></div>
<div class="t" style="left:3250.48px;width:120px;text-align:center;top:1451.07px;font-size:20px;color:#c8c8c8">00240</div>
<div class="a" style="left:3403.7px;top:1474.5px;width:1.6px;height:21px;background:#c0c0c0;"></div>
<div class="t" style="left:3343.00px;width:120px;text-align:center;top:1451.07px;font-size:20px;color:#c8c8c8">00250</div>
<div class="a" style="left:1040px;top:1446px;width:36px;height:40px;background:#1e1e1e;"></div>
<div class="a" style="left:3418px;top:1446px;width:33px;height:40px;background:#1e1e1e;"></div>
<div class="a" style="left:1087px;top:1483px;width:754px;height:2px;background:#111;"></div>
<div class="a" style="left:1089px;top:1485px;width:752px;height:31px;background:#646464;"></div>
<div class="a" style="left:1078px;top:1485px;width:11px;height:31px;background:#3e93f4;border-radius:8px 0 0 8px"></div>
<div class="a" style="left:1840.5px;top:1485px;width:11px;height:31px;background:#3e93f4;border-radius:0 8px 8px 0"></div>
<div class="a" style="left:1076px;top:1516px;width:2342px;height:2.5px;background:#0a0a0a;"></div>
<div class="a" style="left:1089.5px;top:1518.5px;width:2314.5px;height:6px;background:#15c02a;"></div>
<div class="a" style="left:4px;top:1526px;width:1070px;height:32px;background:#2e2e2e;"></div>
<div class="a" style="left:1076px;top:1526px;width:14px;height:32px;background:#333;"></div>
<div class="a" style="left:1090px;top:1526px;width:2314px;height:32px;background:#6c6b7c;border-top:1px solid rgba(255,255,255,0.08);border-bottom:1px solid rgba(0,0,0,0.25)"></div>
<div class="a" style="left:3404px;top:1526px;width:14px;height:32px;background:#303030;"></div>
<div class="a" style="left:4px;top:1558px;width:3414px;height:2px;background:#0c0c0c;"></div>
<div class="a" style="left:12px;top:1529px;width:26px;height:26px;background:#111;border-radius:5px;border:1.5px solid #262626"></div>
<div class="a" style="left:102px;top:1529px;width:26px;height:26px;background:#111;border-radius:5px;border:1.5px solid #262626"></div>
<svg style="left:150px;top:1533px" width="10" height="18" viewBox="0 0 10 18"><polyline points="1.5,1.5 9,9.0 1.5,16.5" fill="none" stroke="#b8b8b8" stroke-width="3" stroke-linecap="round" stroke-linejoin="round"/></svg>
<div class="a" style="left:174px;top:1530px;width:24px;height:24px;background:#aaa8cc;"></div>
<div class="t" style="left:216px;top:1532.22px;font-size:21px;color:#bdbdbd;transform:scale(1.0,1.08);transform-origin:0 17.78px;">1</div>
<svg style="left:278px;top:1530px" width="19.4" height="24.6" viewBox="0 0 22 28"><path d="M0 0 H14 L22 8 V28 H0 Z" fill="#efefef"/><path d="M14 0 V8 H22" fill="#d8d8d8"/><rect x="5" y="8" width="11.5" height="6" rx="1.5" fill="#9bb8ee"/><rect x="5" y="14" width="11.5" height="3" fill="#2d3f8a"/><rect x="5" y="17" width="11.5" height="3.5" fill="#c9d6ee"/><rect x="10" y="14.5" width="5" height="4" fill="#222"/><rect x="7" y="24" width="9" height="1.2" fill="#aaa"/></svg>
<div class="t" style="left:312px;top:1532.22px;font-size:21px;color:#bdbdbd;transform:scale(1.0,1.08);transform-origin:0 17.78px;">cycle_marche1.jpg</div>
<div class="a" style="left:538px;top:1529px;width:26px;height:26px;background:#111;border-radius:5px;border:1.5px solid #262626"></div>
<svg style="left:539px;top:1532px" width="26" height="20" viewBox="0 0 26 20"><path d="M3 10 Q3 0 13 0 Q23 0 23 10 Z" fill="#bdbdbd"/><circle cx="9.5" cy="6.5" r="2.2" fill="#111"/><circle cx="16.5" cy="6.5" r="2.2" fill="#111"/><rect x="10.5" y="9" width="5" height="10" rx="2.5" fill="#bdbdbd"/><rect x="0" y="13" width="8" height="1.8" fill="#bdbdbd"/><rect x="18" y="13" width="8" height="1.8" fill="#bdbdbd"/></svg>
<div class="a" style="left:598px;top:1529px;width:26px;height:26px;background:#111;border-radius:5px;border:1.5px solid #262626"></div>
<svg style="left:600px;top:1531px" width="22" height="22" viewBox="0 0 22 22"><line x1="2" y1="20" x2="20" y2="2" stroke="#c0c0c0" stroke-width="2.4" stroke-linecap="round"/></svg>
<div class="a" style="left:688px;top:1529px;width:25px;height:26px;background:#111;border-radius:5px;border:1.5px solid #262626"></div>
<div class="a" style="left:718px;top:1529px;width:26px;height:26px;background:#111;border-radius:5px;border:1.5px solid #262626"></div>
<div class="a" style="left:748px;top:1529px;width:26px;height:26px;background:#111;border-radius:5px;border:1.5px solid #262626"></div>
<svg style="left:819px;top:1530px" width="24" height="24" viewBox="0 0 24 24"><polyline points="11.48,8.02 11.10,8.03 10.72,8.08 10.33,8.18 9.96,8.34 9.59,8.54 9.25,8.79 8.93,9.09 8.65,9.44 8.41,9.83 8.21,10.25 8.07,10.70 7.97,11.18 7.94,11.67 7.97,12.18 8.06,12.68 8.22,13.18 8.44,13.67 8.73,14.14 9.07,14.57 9.47,14.97 9.93,15.32 10.44,15.61 10.98,15.85 11.56,16.02 12.17,16.12 12.79,16.14 13.43,16.09 14.06,15.96 14.68,15.76 15.28,15.47 15.85,15.10 16.37,14.67 16.85,14.16 17.27,13.60 17.62,12.98 17.90,12.31 18.10,11.60 18.21,10.86 18.23,10.11 18.16,9.35 18.00,8.59 17.74,7.85 17.39,7.13 16.95,6.46 16.43,5.84 15.82,5.27 15.15,4.78 14.41,4.37 13.62,4.05 12.78,3.82 11.92,3.69 11.03,3.67 10.14,3.76 9.26,3.96 8.39,4.26 7.57,4.67 6.78,5.19 6.06,5.80 5.41,6.50 4.85,7.28 4.37,8.13 4.01,9.05 3.75,10.01 3.60,11.00 3.58,12.02 3.68,13.04 3.91,14.05 4.26,15.04 4.73,15.98 5.31,16.87 6.01,17.69 6.80,18.43 7.69,19.08 8.66,19.61 9.69,20.03 10.78,20.33 11.90,20.49 13.05,20.52 14.20,20.40 15.34,20.15 16.45,19.76 17.51,19.24 18.51,18.58 19.44,17.80 20.26,16.91 20.99,15.92 21.59,14.84 22.06,13.69 22.39,12.48 22.58,11.22 22.61,9.95 22.49,8.67 22.22,7.40 21.79,6.16 21.21,4.98" fill="none" stroke="#bdbdbd" stroke-width="2" stroke-linecap="round"/></svg>
<div class="a" style="left:856px;top:1529px;width:178px;height:27px;background:#0e0e0e;border-radius:8px"></div>
<div class="t" style="left:872px;top:1532.22px;font-size:21px;color:#d0d0d0;width:116px;overflow:hidden">Aucun</div>
<svg style="left:998px;top:1537px" width="20" height="11" viewBox="0 0 20 11"><polyline points="1.5,1.5 10.0,10 18.5,1.5" fill="none" stroke="#c8c8c8" stroke-width="3" stroke-linecap="round" stroke-linejoin="round"/></svg>
<div class="a" style="left:4px;top:1560px;width:1070px;height:32px;background:#2e2e2e;"></div>
<div class="a" style="left:1076px;top:1560px;width:14px;height:32px;background:#333;"></div>
<div class="a" style="left:1090px;top:1560px;width:2314px;height:32px;background:#6c6b7c;border-top:1px solid rgba(255,255,255,0.08);border-bottom:1px solid rgba(0,0,0,0.25)"></div>
<div class="a" style="left:3404px;top:1560px;width:14px;height:32px;background:#303030;"></div>
<div class="a" style="left:4px;top:1592px;width:3414px;height:2px;background:#0c0c0c;"></div>
<div class="a" style="left:12px;top:1563px;width:26px;height:26px;background:#111;border-radius:5px;border:1.5px solid #262626"></div>
<svg style="left:15px;top:1569px" width="20" height="16" viewBox="0 0 20 16"><path d="M0 8 Q10 -2 20 8 Q10 18 0 8 Z" fill="#c0c0c0"/><circle cx="10" cy="8" r="4" fill="#111"/><circle cx="11" cy="7" r="1.3" fill="#c0c0c0"/></svg>
<div class="a" style="left:72px;top:1563px;width:25px;height:26px;background:#111;border-radius:5px;border:1.5px solid #262626"></div>
<div class="a" style="left:102px;top:1563px;width:26px;height:26px;background:#111;border-radius:5px;border:1.5px solid #262626"></div>
<svg style="left:150px;top:1567px" width="10" height="18" viewBox="0 0 10 18"><polyline points="1.5,1.5 9,9.0 1.5,16.5" fill="none" stroke="#b8b8b8" stroke-width="3" stroke-linecap="round" stroke-linejoin="round"/></svg>
<div class="a" style="left:174px;top:1564px;width:24px;height:24px;background:#aaa8cc;"></div>
<div class="t" style="left:216px;top:1566.22px;font-size:21px;color:#bdbdbd;transform:scale(1.0,1.08);transform-origin:0 17.78px;">2</div>
<svg style="left:277px;top:1564px" width="22" height="24" viewBox="0 0 22 24"><path d="M1 1 H15 L21 7 V23 H1 Z" fill="#2a0a00" stroke="#e8892a" stroke-width="1.6"/><text x="4" y="14" font-family="Liberation Sans" font-weight="bold" font-size="11" fill="#f0a030">Ai</text><text x="8" y="21" font-family="Liberation Sans" font-size="5" fill="#f0a030">AI</text></svg>
<div class="t" style="left:312px;top:1566.22px;font-size:21px;color:#bdbdbd;transform:scale(1.0,1.08);transform-origin:0 17.78px;">bras dr<span style="letter-spacing:-1.5px">...</span>sonnage_1.ai</div>
<div class="a" style="left:538px;top:1563px;width:26px;height:26px;background:#111;border-radius:5px;border:1.5px solid #262626"></div>
<svg style="left:539px;top:1566px" width="26" height="20" viewBox="0 0 26 20"><path d="M3 10 Q3 0 13 0 Q23 0 23 10 Z" fill="#bdbdbd"/><circle cx="9.5" cy="6.5" r="2.2" fill="#111"/><circle cx="16.5" cy="6.5" r="2.2" fill="#111"/><rect x="10.5" y="9" width="5" height="10" rx="2.5" fill="#bdbdbd"/><rect x="0" y="13" width="8" height="1.8" fill="#bdbdbd"/><rect x="18" y="13" width="8" height="1.8" fill="#bdbdbd"/></svg>
<div class="a" style="left:568px;top:1563px;width:26px;height:26px;background:#111;border-radius:5px;border:1.5px solid #262626"></div>
<div class="a" style="left:598px;top:1563px;width:26px;height:26px;background:#111;border-radius:5px;border:1.5px solid #262626"></div>
<svg style="left:600px;top:1565px" width="22" height="22" viewBox="0 0 22 22"><line x1="2" y1="20" x2="20" y2="2" stroke="#c0c0c0" stroke-width="2.4" stroke-linecap="round"/></svg>
<div class="a" style="left:688px;top:1563px;width:25px;height:26px;background:#111;border-radius:5px;border:1.5px solid #262626"></div>
<div class="a" style="left:718px;top:1563px;width:26px;height:26px;background:#111;border-radius:5px;border:1.5px solid #262626"></div>
<div class="a" style="left:748px;top:1563px;width:26px;height:26px;background:#111;border-radius:5px;border:1.5px solid #262626"></div>
<svg style="left:819px;top:1564px" width="24" height="24" viewBox="0 0 24 24"><polyline points="11.48,8.02 11.10,8.03 10.72,8.08 10.33,8.18 9.96,8.34 9.59,8.54 9.25,8.79 8.93,9.09 8.65,9.44 8.41,9.83 8.21,10.25 8.07,10.70 7.97,11.18 7.94,11.67 7.97,12.18 8.06,12.68 8.22,13.18 8.44,13.67 8.73,14.14 9.07,14.57 9.47,14.97 9.93,15.32 10.44,15.61 10.98,15.85 11.56,16.02 12.17,16.12 12.79,16.14 13.43,16.09 14.06,15.96 14.68,15.76 15.28,15.47 15.85,15.10 16.37,14.67 16.85,14.16 17.27,13.60 17.62,12.98 17.90,12.31 18.10,11.60 18.21,10.86 18.23,10.11 18.16,9.35 18.00,8.59 17.74,7.85 17.39,7.13 16.95,6.46 16.43,5.84 15.82,5.27 15.15,4.78 14.41,4.37 13.62,4.05 12.78,3.82 11.92,3.69 11.03,3.67 10.14,3.76 9.26,3.96 8.39,4.26 7.57,4.67 6.78,5.19 6.06,5.80 5.41,6.50 4.85,7.28 4.37,8.13 4.01,9.05 3.75,10.01 3.60,11.00 3.58,12.02 3.68,13.04 3.91,14.05 4.26,15.04 4.73,15.98 5.31,16.87 6.01,17.69 6.80,18.43 7.69,19.08 8.66,19.61 9.69,20.03 10.78,20.33 11.90,20.49 13.05,20.52 14.20,20.40 15.34,20.15 16.45,19.76 17.51,19.24 18.51,18.58 19.44,17.80 20.26,16.91 20.99,15.92 21.59,14.84 22.06,13.69 22.39,12.48 22.58,11.22 22.61,9.95 22.49,8.67 22.22,7.40 21.79,6.16 21.21,4.98" fill="none" stroke="#bdbdbd" stroke-width="2" stroke-linecap="round"/></svg>
<div class="a" style="left:856px;top:1563px;width:178px;height:27px;background:#0e0e0e;border-radius:8px"></div>
<div class="t" style="left:872px;top:1566.22px;font-size:21px;color:#d0d0d0;width:116px;overflow:hidden">6. corps/per</div>
<svg style="left:998px;top:1571px" width="20" height="11" viewBox="0 0 20 11"><polyline points="1.5,1.5 10.0,10 18.5,1.5" fill="none" stroke="#c8c8c8" stroke-width="3" stroke-linecap="round" stroke-linejoin="round"/></svg>
<div class="a" style="left:4px;top:1594px;width:1070px;height:32px;background:#2e2e2e;"></div>
<div class="a" style="left:1076px;top:1594px;width:14px;height:32px;background:#333;"></div>
<div class="a" style="left:1090px;top:1594px;width:2314px;height:32px;background:#6c6b7c;border-top:1px solid rgba(255,255,255,0.08);border-bottom:1px solid rgba(0,0,0,0.25)"></div>
<div class="a" style="left:3404px;top:1594px;width:14px;height:32px;background:#303030;"></div>
<div class="a" style="left:4px;top:1626px;width:3414px;height:2px;background:#0c0c0c;"></div>
<div class="a" style="left:12px;top:1597px;width:26px;height:26px;background:#111;border-radius:5px;border:1.5px solid #262626"></div>
<svg style="left:15px;top:1603px" width="20" height="16" viewBox="0 0 20 16"><path d="M0 8 Q10 -2 20 8 Q10 18 0 8 Z" fill="#c0c0c0"/><circle cx="10" cy="8" r="4" fill="#111"/><circle cx="11" cy="7" r="1.3" fill="#c0c0c0"/></svg>
<div class="a" style="left:72px;top:1597px;width:25px;height:26px;background:#111;border-radius:5px;border:1.5px solid #262626"></div>
<div class="a" style="left:102px;top:1597px;width:26px;height:26px;background:#111;border-radius:5px;border:1.5px solid #262626"></div>
<svg style="left:150px;top:1601px" width="10" height="18" viewBox="0 0 10 18"><polyline points="1.5,1.5 9,9.0 1.5,16.5" fill="none" stroke="#b8b8b8" stroke-width="3" stroke-linecap="round" stroke-linejoin="round"/></svg>
<div class="a" style="left:174px;top:1598px;width:24px;height:24px;background:#aaa8cc;"></div>
<div class="t" style="left:216px;top:1600.22px;font-size:21px;color:#bdbdbd;transform:scale(1.0,1.08);transform-origin:0 17.78px;">3</div>
<svg style="left:277px;top:1598px" width="22" height="24" viewBox="0 0 22 24"><path d="M1 1 H15 L21 7 V23 H1 Z" fill="#2a0a00" stroke="#e8892a" stroke-width="1.6"/><text x="4" y="14" font-family="Liberation Sans" font-weight="bold" font-size="11" fill="#f0a030">Ai</text><text x="8" y="21" font-family="Liberation Sans" font-size="5" fill="#f0a030">AI</text></svg>
<div class="t" style="left:312px;top:1600.22px;font-size:21px;color:#bdbdbd;transform:scale(1.0,1.08);transform-origin:0 17.78px;">jambe b<span style="letter-spacing:-1.5px">...</span>onnage_1.ai</div>
<div class="a" style="left:538px;top:1597px;width:26px;height:26px;background:#111;border-radius:5px;border:1.5px solid #262626"></div>
<svg style="left:539px;top:1600px" width="26" height="20" viewBox="0 0 26 20"><path d="M3 10 Q3 0 13 0 Q23 0 23 10 Z" fill="#bdbdbd"/><circle cx="9.5" cy="6.5" r="2.2" fill="#111"/><circle cx="16.5" cy="6.5" r="2.2" fill="#111"/><rect x="10.5" y="9" width="5" height="10" rx="2.5" fill="#bdbdbd"/><rect x="0" y="13" width="8" height="1.8" fill="#bdbdbd"/><rect x="18" y="13" width="8" height="1.8" fill="#bdbdbd"/></svg>
<div class="a" style="left:568px;top:1597px;width:26px;height:26px;background:#111;border-radius:5px;border:1.5px solid #262626"></div>
<div class="a" style="left:598px;top:1597px;width:26px;height:26px;background:#111;border-radius:5px;border:1.5px solid #262626"></div>
<svg style="left:600px;top:1599px" width="22" height="22" viewBox="0 0 22 22"><line x1="2" y1="20" x2="20" y2="2" stroke="#c0c0c0" stroke-width="2.4" stroke-linecap="round"/></svg>
<div class="a" style="left:688px;top:1597px;width:25px;height:26px;background:#111;border-radius:5px;border:1.5px solid #262626"></div>
<div class="a" style="left:718px;top:1597px;width:26px;height:26px;background:#111;border-radius:5px;border:1.5px solid #262626"></div>
<div class="a" style="left:748px;top:1597px;width:26px;height:26px;background:#111;border-radius:5px;border:1.5px solid #262626"></div>
<svg style="left:819px;top:1598px" width="24" height="24" viewBox="0 0 24 24"><polyline points="11.48,8.02 11.10,8.03 10.72,8.08 10.33,8.18 9.96,8.34 9.59,8.54 9.25,8.79 8.93,9.09 8.65,9.44 8.41,9.83 8.21,10.25 8.07,10.70 7.97,11.18 7.94,11.67 7.97,12.18 8.06,12.68 8.22,13.18 8.44,13.67 8.73,14.14 9.07,14.57 9.47,14.97 9.93,15.32 10.44,15.61 10.98,15.85 11.56,16.02 12.17,16.12 12.79,16.14 13.43,16.09 14.06,15.96 14.68,15.76 15.28,15.47 15.85,15.10 16.37,14.67 16.85,14.16 17.27,13.60 17.62,12.98 17.90,12.31 18.10,11.60 18.21,10.86 18.23,10.11 18.16,9.35 18.00,8.59 17.74,7.85 17.39,7.13 16.95,6.46 16.43,5.84 15.82,5.27 15.15,4.78 14.41,4.37 13.62,4.05 12.78,3.82 11.92,3.69 11.03,3.67 10.14,3.76 9.26,3.96 8.39,4.26 7.57,4.67 6.78,5.19 6.06,5.80 5.41,6.50 4.85,7.28 4.37,8.13 4.01,9.05 3.75,10.01 3.60,11.00 3.58,12.02 3.68,13.04 3.91,14.05 4.26,15.04 4.73,15.98 5.31,16.87 6.01,17.69 6.80,18.43 7.69,19.08 8.66,19.61 9.69,20.03 10.78,20.33 11.90,20.49 13.05,20.52 14.20,20.40 15.34,20.15 16.45,19.76 17.51,19.24 18.51,18.58 19.44,17.80 20.26,16.91 20.99,15.92 21.59,14.84 22.06,13.69 22.39,12.48 22.58,11.22 22.61,9.95 22.49,8.67 22.22,7.40 21.79,6.16 21.21,4.98" fill="none" stroke="#bdbdbd" stroke-width="2" stroke-linecap="round"/></svg>
<div class="a" style="left:856px;top:1597px;width:178px;height:27px;background:#0e0e0e;border-radius:8px"></div>
<div class="t" style="left:872px;top:1600.22px;font-size:21px;color:#d0d0d0;width:116px;overflow:hidden">4. jambe ha</div>
<svg style="left:998px;top:1605px" width="20" height="11" viewBox="0 0 20 11"><polyline points="1.5,1.5 10.0,10 18.5,1.5" fill="none" stroke="#c8c8c8" stroke-width="3" stroke-linecap="round" stroke-linejoin="round"/></svg>
<div class="a" style="left:4px;top:1628px;width:1070px;height:32px;background:#2e2e2e;"></div>
<div class="a" style="left:1076px;top:1628px;width:14px;height:32px;background:#333;"></div>
<div class="a" style="left:1090px;top:1628px;width:2314px;height:32px;background:#6c6b7c;border-top:1px solid rgba(255,255,255,0.08);border-bottom:1px solid rgba(0,0,0,0.25)"></div>
<div class="a" style="left:3404px;top:1628px;width:14px;height:32px;background:#303030;"></div>
<div class="a" style="left:4px;top:1660px;width:3414px;height:2px;background:#0c0c0c;"></div>
<div class="a" style="left:12px;top:1631px;width:26px;height:26px;background:#111;border-radius:5px;border:1.5px solid #262626"></div>
<svg style="left:15px;top:1637px" width="20" height="16" viewBox="0 0 20 16"><path d="M0 8 Q10 -2 20 8 Q10 18 0 8 Z" fill="#c0c0c0"/><circle cx="10" cy="8" r="4" fill="#111"/><circle cx="11" cy="7" r="1.3" fill="#c0c0c0"/></svg>
<div class="a" style="left:72px;top:1631px;width:25px;height:26px;background:#111;border-radius:5px;border:1.5px solid #262626"></div>
<div class="a" style="left:102px;top:1631px;width:26px;height:26px;background:#111;border-radius:5px;border:1.5px solid #262626"></div>
<svg style="left:150px;top:1635px" width="10" height="18" viewBox="0 0 10 18"><polyline points="1.5,1.5 9,9.0 1.5,16.5" fill="none" stroke="#b8b8b8" stroke-width="3" stroke-linecap="round" stroke-linejoin="round"/></svg>
<div class="a" style="left:174px;top:1632px;width:24px;height:24px;background:#aaa8cc;"></div>
<div class="t" style="left:216px;top:1634.22px;font-size:21px;color:#bdbdbd;transform:scale(1.0,1.08);transform-origin:0 17.78px;">4</div>
<svg style="left:277px;top:1632px" width="22" height="24" viewBox="0 0 22 24"><path d="M1 1 H15 L21 7 V23 H1 Z" fill="#2a0a00" stroke="#e8892a" stroke-width="1.6"/><text x="4" y="14" font-family="Liberation Sans" font-weight="bold" font-size="11" fill="#f0a030">Ai</text><text x="8" y="21" font-family="Liberation Sans" font-size="5" fill="#f0a030">AI</text></svg>
<div class="t" style="left:312px;top:1634.22px;font-size:21px;color:#bdbdbd;transform:scale(1.0,1.08);transform-origin:0 17.78px;">jambe h<span style="letter-spacing:-1.5px">...</span>nnage_1.ai</div>
<div class="a" style="left:538px;top:1631px;width:26px;height:26px;background:#111;border-radius:5px;border:1.5px solid #262626"></div>
<svg style="left:539px;top:1634px" width="26" height="20" viewBox="0 0 26 20"><path d="M3 10 Q3 0 13 0 Q23 0 23 10 Z" fill="#bdbdbd"/><circle cx="9.5" cy="6.5" r="2.2" fill="#111"/><circle cx="16.5" cy="6.5" r="2.2" fill="#111"/><rect x="10.5" y="9" width="5" height="10" rx="2.5" fill="#bdbdbd"/><rect x="0" y="13" width="8" height="1.8" fill="#bdbdbd"/><rect x="18" y="13" width="8" height="1.8" fill="#bdbdbd"/></svg>
<div class="a" style="left:568px;top:1631px;width:26px;height:26px;background:#111;border-radius:5px;border:1.5px solid #262626"></div>
<div class="a" style="left:598px;top:1631px;width:26px;height:26px;background:#111;border-radius:5px;border:1.5px solid #262626"></div>
<svg style="left:600px;top:1633px" width="22" height="22" viewBox="0 0 22 22"><line x1="2" y1="20" x2="20" y2="2" stroke="#c0c0c0" stroke-width="2.4" stroke-linecap="round"/></svg>
<div class="a" style="left:688px;top:1631px;width:25px;height:26px;background:#111;border-radius:5px;border:1.5px solid #262626"></div>
<div class="a" style="left:718px;top:1631px;width:26px;height:26px;background:#111;border-radius:5px;border:1.5px solid #262626"></div>
<div class="a" style="left:748px;top:1631px;width:26px;height:26px;background:#111;border-radius:5px;border:1.5px solid #262626"></div>
<svg style="left:819px;top:1632px" width="24" height="24" viewBox="0 0 24 24"><polyline points="11.48,8.02 11.10,8.03 10.72,8.08 10.33,8.18 9.96,8.34 9.59,8.54 9.25,8.79 8.93,9.09 8.65,9.44 8.41,9.83 8.21,10.25 8.07,10.70 7.97,11.18 7.94,11.67 7.97,12.18 8.06,12.68 8.22,13.18 8.44,13.67 8.73,14.14 9.07,14.57 9.47,14.97 9.93,15.32 10.44,15.61 10.98,15.85 11.56,16.02 12.17,16.12 12.79,16.14 13.43,16.09 14.06,15.96 14.68,15.76 15.28,15.47 15.85,15.10 16.37,14.67 16.85,14.16 17.27,13.60 17.62,12.98 17.90,12.31 18.10,11.60 18.21,10.86 18.23,10.11 18.16,9.35 18.00,8.59 17.74,7.85 17.39,7.13 16.95,6.46 16.43,5.84 15.82,5.27 15.15,4.78 14.41,4.37 13.62,4.05 12.78,3.82 11.92,3.69 11.03,3.67 10.14,3.76 9.26,3.96 8.39,4.26 7.57,4.67 6.78,5.19 6.06,5.80 5.41,6.50 4.85,7.28 4.37,8.13 4.01,9.05 3.75,10.01 3.60,11.00 3.58,12.02 3.68,13.04 3.91,14.05 4.26,15.04 4.73,15.98 5.31,16.87 6.01,17.69 6.80,18.43 7.69,19.08 8.66,19.61 9.69,20.03 10.78,20.33 11.90,20.49 13.05,20.52 14.20,20.40 15.34,20.15 16.45,19.76 17.51,19.24 18.51,18.58 19.44,17.80 20.26,16.91 20.99,15.92 21.59,14.84 22.06,13.69 22.39,12.48 22.58,11.22 22.61,9.95 22.49,8.67 22.22,7.40 21.79,6.16 21.21,4.98" fill="none" stroke="#bdbdbd" stroke-width="2" stroke-linecap="round"/></svg>
<div class="a" style="left:856px;top:1631px;width:178px;height:27px;background:#0e0e0e;border-radius:8px"></div>
<div class="t" style="left:872px;top:1634.22px;font-size:21px;color:#d0d0d0;width:116px;overflow:hidden">6. corps/per</div>
<svg style="left:998px;top:1639px" width="20" height="11" viewBox="0 0 20 11"><polyline points="1.5,1.5 10.0,10 18.5,1.5" fill="none" stroke="#c8c8c8" stroke-width="3" stroke-linecap="round" stroke-linejoin="round"/></svg>
<div class="a" style="left:4px;top:1662px;width:1070px;height:32px;background:#2e2e2e;"></div>
<div class="a" style="left:1076px;top:1662px;width:14px;height:32px;background:#333;"></div>
<div class="a" style="left:1090px;top:1662px;width:2314px;height:32px;background:#6c6b7c;border-top:1px solid rgba(255,255,255,0.08);border-bottom:1px solid rgba(0,0,0,0.25)"></div>
<div class="a" style="left:3404px;top:1662px;width:14px;height:32px;background:#303030;"></div>
<div class="a" style="left:4px;top:1694px;width:3414px;height:2px;background:#0c0c0c;"></div>
<div class="a" style="left:12px;top:1665px;width:26px;height:26px;background:#111;border-radius:5px;border:1.5px solid #262626"></div>
<svg style="left:15px;top:1671px" width="20" height="16" viewBox="0 0 20 16"><path d="M0 8 Q10 -2 20 8 Q10 18 0 8 Z" fill="#c0c0c0"/><circle cx="10" cy="8" r="4" fill="#111"/><circle cx="11" cy="7" r="1.3" fill="#c0c0c0"/></svg>
<div class="a" style="left:72px;top:1665px;width:25px;height:26px;background:#111;border-radius:5px;border:1.5px solid #262626"></div>
<div class="a" style="left:102px;top:1665px;width:26px;height:26px;background:#111;border-radius:5px;border:1.5px solid #262626"></div>
<svg style="left:150px;top:1669px" width="10" height="18" viewBox="0 0 10 18"><polyline points="1.5,1.5 9,9.0 1.5,16.5" fill="none" stroke="#b8b8b8" stroke-width="3" stroke-linecap="round" stroke-linejoin="round"/></svg>
<div class="a" style="left:174px;top:1666px;width:24px;height:24px;background:#aaa8cc;"></div>
<div class="t" style="left:216px;top:1668.22px;font-size:21px;color:#bdbdbd;transform:scale(1.0,1.08);transform-origin:0 17.78px;">5</div>
<svg style="left:277px;top:1666px" width="22" height="24" viewBox="0 0 22 24"><path d="M1 1 H15 L21 7 V23 H1 Z" fill="#2a0a00" stroke="#e8892a" stroke-width="1.6"/><text x="4" y="14" font-family="Liberation Sans" font-weight="bold" font-size="11" fill="#f0a030">Ai</text><text x="8" y="21" font-family="Liberation Sans" font-size="5" fill="#f0a030">AI</text></svg>
<div class="t" style="left:312px;top:1668.22px;font-size:21px;color:#bdbdbd;transform:scale(1.0,1.08);transform-origin:0 17.78px;">pied dr<span style="letter-spacing:-1.5px">...</span>sonnage_1.ai</div>
<div class="a" style="left:538px;top:1665px;width:26px;height:26px;background:#111;border-radius:5px;border:1.5px solid #262626"></div>
<svg style="left:539px;top:1668px" width="26" height="20" viewBox="0 0 26 20"><path d="M3 10 Q3 0 13 0 Q23 0 23 10 Z" fill="#bdbdbd"/><circle cx="9.5" cy="6.5" r="2.2" fill="#111"/><circle cx="16.5" cy="6.5" r="2.2" fill="#111"/><rect x="10.5" y="9" width="5" height="10" rx="2.5" fill="#bdbdbd"/><rect x="0" y="13" width="8" height="1.8" fill="#bdbdbd"/><rect x="18" y="13" width="8" height="1.8" fill="#bdbdbd"/></svg>
<div class="a" style="left:568px;top:1665px;width:26px;height:26px;background:#111;border-radius:5px;border:1.5px solid #262626"></div>
<div class="a" style="left:598px;top:1665px;width:26px;height:26px;background:#111;border-radius:5px;border:1.5px solid #262626"></div>
<svg style="left:600px;top:1667px" width="22" height="22" viewBox="0 0 22 22"><line x1="2" y1="20" x2="20" y2="2" stroke="#c0c0c0" stroke-width="2.4" stroke-linecap="round"/></svg>
<div class="a" style="left:688px;top:1665px;width:25px;height:26px;background:#111;border-radius:5px;border:1.5px solid #262626"></div>
<div class="a" style="left:718px;top:1665px;width:26px;height:26px;background:#111;border-radius:5px;border:1.5px solid #262626"></div>
<div class="a" style="left:748px;top:1665px;width:26px;height:26px;background:#111;border-radius:5px;border:1.5px solid #262626"></div>
<svg style="left:819px;top:1666px" width="24" height="24" viewBox="0 0 24 24"><polyline points="11.48,8.02 11.10,8.03 10.72,8.08 10.33,8.18 9.96,8.34 9.59,8.54 9.25,8.79 8.93,9.09 8.65,9.44 8.41,9.83 8.21,10.25 8.07,10.70 7.97,11.18 7.94,11.67 7.97,12.18 8.06,12.68 8.22,13.18 8.44,13.67 8.73,14.14 9.07,14.57 9.47,14.97 9.93,15.32 10.44,15.61 10.98,15.85 11.56,16.02 12.17,16.12 12.79,16.14 13.43,16.09 14.06,15.96 14.68,15.76 15.28,15.47 15.85,15.10 16.37,14.67 16.85,14.16 17.27,13.60 17.62,12.98 17.90,12.31 18.10,11.60 18.21,10.86 18.23,10.11 18.16,9.35 18.00,8.59 17.74,7.85 17.39,7.13 16.95,6.46 16.43,5.84 15.82,5.27 15.15,4.78 14.41,4.37 13.62,4.05 12.78,3.82 11.92,3.69 11.03,3.67 10.14,3.76 9.26,3.96 8.39,4.26 7.57,4.67 6.78,5.19 6.06,5.80 5.41,6.50 4.85,7.28 4.37,8.13 4.01,9.05 3.75,10.01 3.60,11.00 3.58,12.02 3.68,13.04 3.91,14.05 4.26,15.04 4.73,15.98 5.31,16.87 6.01,17.69 6.80,18.43 7.69,19.08 8.66,19.61 9.69,20.03 10.78,20.33 11.90,20.49 13.05,20.52 14.20,20.40 15.34,20.15 16.45,19.76 17.51,19.24 18.51,18.58 19.44,17.80 20.26,16.91 20.99,15.92 21.59,14.84 22.06,13.69 22.39,12.48 22.58,11.22 22.61,9.95 22.49,8.67 22.22,7.40 21.79,6.16 21.21,4.98" fill="none" stroke="#bdbdbd" stroke-width="2" stroke-linecap="round"/></svg>
<div class="a" style="left:856px;top:1665px;width:178px;height:27px;background:#0e0e0e;border-radius:8px"></div>
<div class="t" style="left:872px;top:1668.22px;font-size:21px;color:#d0d0d0;width:116px;overflow:hidden">3. jambe ba</div>
<svg style="left:998px;top:1673px" width="20" height="11" viewBox="0 0 20 11"><polyline points="1.5,1.5 10.0,10 18.5,1.5" fill="none" stroke="#c8c8c8" stroke-width="3" stroke-linecap="round" stroke-linejoin="round"/></svg>
<div class="a" style="left:4px;top:1696px;width:1070px;height:32px;background:#2e2e2e;"></div>
<div class="a" style="left:1076px;top:1696px;width:14px;height:32px;background:#333;"></div>
<div class="a" style="left:1090px;top:1696px;width:2314px;height:32px;background:#878048;border-top:1px solid rgba(255,255,255,0.08);border-bottom:1px solid rgba(0,0,0,0.25)"></div>
<div class="a" style="left:3404px;top:1696px;width:14px;height:32px;background:#303030;"></div>
<div class="a" style="left:4px;top:1728px;width:3414px;height:2px;background:#0c0c0c;"></div>
<div class="a" style="left:12px;top:1699px;width:26px;height:26px;background:#111;border-radius:5px;border:1.5px solid #262626"></div>
<svg style="left:15px;top:1705px" width="20" height="16" viewBox="0 0 20 16"><path d="M0 8 Q10 -2 20 8 Q10 18 0 8 Z" fill="#c0c0c0"/><circle cx="10" cy="8" r="4" fill="#111"/><circle cx="11" cy="7" r="1.3" fill="#c0c0c0"/></svg>
<div class="a" style="left:72px;top:1699px;width:25px;height:26px;background:#111;border-radius:5px;border:1.5px solid #262626"></div>
<div class="a" style="left:102px;top:1699px;width:26px;height:26px;background:#111;border-radius:5px;border:1.5px solid #262626"></div>
<svg style="left:150px;top:1703px" width="10" height="18" viewBox="0 0 10 18"><polyline points="1.5,1.5 9,9.0 1.5,16.5" fill="none" stroke="#b8b8b8" stroke-width="3" stroke-linecap="round" stroke-linejoin="round"/></svg>
<div class="a" style="left:174px;top:1700px;width:24px;height:24px;background:#e2d763;"></div>
<div class="t" style="left:216px;top:1702.22px;font-size:21px;color:#bdbdbd;transform:scale(1.0,1.08);transform-origin:0 17.78px;">6</div>
<svg style="left:277px;top:1700px" width="22" height="24" viewBox="0 0 22 24"><path d="M1 1 H15 L21 7 V23 H1 Z" fill="#2a0a00" stroke="#e8892a" stroke-width="1.6"/><text x="4" y="14" font-family="Liberation Sans" font-weight="bold" font-size="11" fill="#f0a030">Ai</text><text x="8" y="21" font-family="Liberation Sans" font-size="5" fill="#f0a030">AI</text></svg>
<div class="t" style="left:312px;top:1702.22px;font-size:21px;color:#bdbdbd;transform:scale(1.0,1.08);transform-origin:0 17.78px;">corps/p<span style="letter-spacing:-1.5px">...</span>nnage_1.ai</div>
<div class="a" style="left:538px;top:1699px;width:26px;height:26px;background:#111;border-radius:5px;border:1.5px solid #262626"></div>
<svg style="left:539px;top:1702px" width="26" height="20" viewBox="0 0 26 20"><path d="M3 10 Q3 0 13 0 Q23 0 23 10 Z" fill="#bdbdbd"/><circle cx="9.5" cy="6.5" r="2.2" fill="#111"/><circle cx="16.5" cy="6.5" r="2.2" fill="#111"/><rect x="10.5" y="9" width="5" height="10" rx="2.5" fill="#bdbdbd"/><rect x="0" y="13" width="8" height="1.8" fill="#bdbdbd"/><rect x="18" y="13" width="8" height="1.8" fill="#bdbdbd"/></svg>
<div class="a" style="left:568px;top:1699px;width:26px;height:26px;background:#111;border-radius:5px;border:1.5px solid #262626"></div>
<div class="a" style="left:598px;top:1699px;width:26px;height:26px;background:#111;border-radius:5px;border:1.5px solid #262626"></div>
<svg style="left:600px;top:1701px" width="22" height="22" viewBox="0 0 22 22"><line x1="2" y1="20" x2="20" y2="2" stroke="#c0c0c0" stroke-width="2.4" stroke-linecap="round"/></svg>
<div class="a" style="left:688px;top:1699px;width:25px;height:26px;background:#111;border-radius:5px;border:1.5px solid #262626"></div>
<div class="a" style="left:718px;top:1699px;width:26px;height:26px;background:#111;border-radius:5px;border:1.5px solid #262626"></div>
<div class="a" style="left:748px;top:1699px;width:26px;height:26px;background:#111;border-radius:5px;border:1.5px solid #262626"></div>
<svg style="left:819px;top:1700px" width="24" height="24" viewBox="0 0 24 24"><polyline points="11.48,8.02 11.10,8.03 10.72,8.08 10.33,8.18 9.96,8.34 9.59,8.54 9.25,8.79 8.93,9.09 8.65,9.44 8.41,9.83 8.21,10.25 8.07,10.70 7.97,11.18 7.94,11.67 7.97,12.18 8.06,12.68 8.22,13.18 8.44,13.67 8.73,14.14 9.07,14.57 9.47,14.97 9.93,15.32 10.44,15.61 10.98,15.85 11.56,16.02 12.17,16.12 12.79,16.14 13.43,16.09 14.06,15.96 14.68,15.76 15.28,15.47 15.85,15.10 16.37,14.67 16.85,14.16 17.27,13.60 17.62,12.98 17.90,12.31 18.10,11.60 18.21,10.86 18.23,10.11 18.16,9.35 18.00,8.59 17.74,7.85 17.39,7.13 16.95,6.46 16.43,5.84 15.82,5.27 15.15,4.78 14.41,4.37 13.62,4.05 12.78,3.82 11.92,3.69 11.03,3.67 10.14,3.76 9.26,3.96 8.39,4.26 7.57,4.67 6.78,5.19 6.06,5.80 5.41,6.50 4.85,7.28 4.37,8.13 4.01,9.05 3.75,10.01 3.60,11.00 3.58,12.02 3.68,13.04 3.91,14.05 4.26,15.04 4.73,15.98 5.31,16.87 6.01,17.69 6.80,18.43 7.69,19.08 8.66,19.61 9.69,20.03 10.78,20.33 11.90,20.49 13.05,20.52 14.20,20.40 15.34,20.15 16.45,19.76 17.51,19.24 18.51,18.58 19.44,17.80 20.26,16.91 20.99,15.92 21.59,14.84 22.06,13.69 22.39,12.48 22.58,11.22 22.61,9.95 22.49,8.67 22.22,7.40 21.79,6.16 21.21,4.98" fill="none" stroke="#bdbdbd" stroke-width="2" stroke-linecap="round"/></svg>
<div class="a" style="left:856px;top:1699px;width:178px;height:27px;background:#0e0e0e;border-radius:8px"></div>
<div class="t" style="left:872px;top:1702.22px;font-size:21px;color:#d0d0d0;width:116px;overflow:hidden">Aucun</div>
<svg style="left:998px;top:1707px" width="20" height="11" viewBox="0 0 20 11"><polyline points="1.5,1.5 10.0,10 18.5,1.5" fill="none" stroke="#c8c8c8" stroke-width="3" stroke-linecap="round" stroke-linejoin="round"/></svg>
<div class="a" style="left:4px;top:1730px;width:1070px;height:32px;background:#2e2e2e;"></div>
<div class="a" style="left:1076px;top:1730px;width:14px;height:32px;background:#333;"></div>
<div class="a" style="left:1090px;top:1730px;width:2314px;height:32px;background:#6c6b7c;border-top:1px solid rgba(255,255,255,0.08);border-bottom:1px solid rgba(0,0,0,0.25)"></div>
<div class="a" style="left:3404px;top:1730px;width:14px;height:32px;background:#303030;"></div>
<div class="a" style="left:4px;top:1762px;width:3414px;height:2px;background:#0c0c0c;"></div>
<div class="a" style="left:12px;top:1733px;width:26px;height:26px;background:#111;border-radius:5px;border:1.5px solid #262626"></div>
<svg style="left:15px;top:1739px" width="20" height="16" viewBox="0 0 20 16"><path d="M0 8 Q10 -2 20 8 Q10 18 0 8 Z" fill="#c0c0c0"/><circle cx="10" cy="8" r="4" fill="#111"/><circle cx="11" cy="7" r="1.3" fill="#c0c0c0"/></svg>
<div class="a" style="left:72px;top:1733px;width:25px;height:26px;background:#111;border-radius:5px;border:1.5px solid #262626"></div>
<div class="a" style="left:102px;top:1733px;width:26px;height:26px;background:#111;border-radius:5px;border:1.5px solid #262626"></div>
<svg style="left:150px;top:1737px" width="10" height="18" viewBox="0 0 10 18"><polyline points="1.5,1.5 9,9.0 1.5,16.5" fill="none" stroke="#b8b8b8" stroke-width="3" stroke-linecap="round" stroke-linejoin="round"/></svg>
<div class="a" style="left:174px;top:1734px;width:24px;height:24px;background:#aaa8cc;"></div>
<div class="t" style="left:216px;top:1736.22px;font-size:21px;color:#bdbdbd;transform:scale(1.0,1.08);transform-origin:0 17.78px;">7</div>
<svg style="left:277px;top:1734px" width="22" height="24" viewBox="0 0 22 24"><path d="M1 1 H15 L21 7 V23 H1 Z" fill="#2a0a00" stroke="#e8892a" stroke-width="1.6"/><text x="4" y="14" font-family="Liberation Sans" font-weight="bold" font-size="11" fill="#f0a030">Ai</text><text x="8" y="21" font-family="Liberation Sans" font-size="5" fill="#f0a030">AI</text></svg>
<div class="t" style="left:312px;top:1736.22px;font-size:21px;color:#bdbdbd;transform:scale(1.0,1.08);transform-origin:0 17.78px;">Jambe b<span style="letter-spacing:-1.5px">...</span>nnage_1.ai</div>
<div class="a" style="left:538px;top:1733px;width:26px;height:26px;background:#111;border-radius:5px;border:1.5px solid #262626"></div>
<svg style="left:539px;top:1736px" width="26" height="20" viewBox="0 0 26 20"><path d="M3 10 Q3 0 13 0 Q23 0 23 10 Z" fill="#bdbdbd"/><circle cx="9.5" cy="6.5" r="2.2" fill="#111"/><circle cx="16.5" cy="6.5" r="2.2" fill="#111"/><rect x="10.5" y="9" width="5" height="10" rx="2.5" fill="#bdbdbd"/><rect x="0" y="13" width="8" height="1.8" fill="#bdbdbd"/><rect x="18" y="13" width="8" height="1.8" fill="#bdbdbd"/></svg>
<div class="a" style="left:568px;top:1733px;width:26px;height:26px;background:#111;border-radius:5px;border:1.5px solid #262626"></div>
<div class="a" style="left:598px;top:1733px;width:26px;height:26px;background:#111;border-radius:5px;border:1.5px solid #262626"></div>
<svg style="left:600px;top:1735px" width="22" height="22" viewBox="0 0 22 22"><line x1="2" y1="20" x2="20" y2="2" stroke="#c0c0c0" stroke-width="2.4" stroke-linecap="round"/></svg>
<div class="a" style="left:688px;top:1733px;width:25px;height:26px;background:#111;border-radius:5px;border:1.5px solid #262626"></div>
<div class="a" style="left:718px;top:1733px;width:26px;height:26px;background:#111;border-radius:5px;border:1.5px solid #262626"></div>
<div class="a" style="left:748px;top:1733px;width:26px;height:26px;background:#111;border-radius:5px;border:1.5px solid #262626"></div>
<svg style="left:819px;top:1734px" width="24" height="24" viewBox="0 0 24 24"><polyline points="11.48,8.02 11.10,8.03 10.72,8.08 10.33,8.18 9.96,8.34 9.59,8.54 9.25,8.79 8.93,9.09 8.65,9.44 8.41,9.83 8.21,10.25 8.07,10.70 7.97,11.18 7.94,11.67 7.97,12.18 8.06,12.68 8.22,13.18 8.44,13.67 8.73,14.14 9.07,14.57 9.47,14.97 9.93,15.32 10.44,15.61 10.98,15.85 11.56,16.02 12.17,16.12 12.79,16.14 13.43,16.09 14.06,15.96 14.68,15.76 15.28,15.47 15.85,15.10 16.37,14.67 16.85,14.16 17.27,13.60 17.62,12.98 17.90,12.31 18.10,11.60 18.21,10.86 18.23,10.11 18.16,9.35 18.00,8.59 17.74,7.85 17.39,7.13 16.95,6.46 16.43,5.84 15.82,5.27 15.15,4.78 14.41,4.37 13.62,4.05 12.78,3.82 11.92,3.69 11.03,3.67 10.14,3.76 9.26,3.96 8.39,4.26 7.57,4.67 6.78,5.19 6.06,5.80 5.41,6.50 4.85,7.28 4.37,8.13 4.01,9.05 3.75,10.01 3.60,11.00 3.58,12.02 3.68,13.04 3.91,14.05 4.26,15.04 4.73,15.98 5.31,16.87 6.01,17.69 6.80,18.43 7.69,19.08 8.66,19.61 9.69,20.03 10.78,20.33 11.90,20.49 13.05,20.52 14.20,20.40 15.34,20.15 16.45,19.76 17.51,19.24 18.51,18.58 19.44,17.80 20.26,16.91 20.99,15.92 21.59,14.84 22.06,13.69 22.39,12.48 22.58,11.22 22.61,9.95 22.49,8.67 22.22,7.40 21.79,6.16 21.21,4.98" fill="none" stroke="#bdbdbd" stroke-width="2" stroke-linecap="round"/></svg>
<div class="a" style="left:856px;top:1733px;width:178px;height:27px;background:#0e0e0e;border-radius:8px"></div>
<div class="t" style="left:872px;top:1736.22px;font-size:21px;color:#d0d0d0;width:116px;overflow:hidden">8. jambe ha</div>
<svg style="left:998px;top:1741px" width="20" height="11" viewBox="0 0 20 11"><polyline points="1.5,1.5 10.0,10 18.5,1.5" fill="none" stroke="#c8c8c8" stroke-width="3" stroke-linecap="round" stroke-linejoin="round"/></svg>
<div class="a" style="left:4px;top:1764px;width:1070px;height:32px;background:#2e2e2e;"></div>
<div class="a" style="left:1076px;top:1764px;width:14px;height:32px;background:#333;"></div>
<div class="a" style="left:1090px;top:1764px;width:2314px;height:32px;background:#6c6b7c;border-top:1px solid rgba(255,255,255,0.08);border-bottom:1px solid rgba(0,0,0,0.25)"></div>
<div class="a" style="left:3404px;top:1764px;width:14px;height:32px;background:#303030;"></div>
<div class="a" style="left:4px;top:1796px;width:3414px;height:2px;background:#0c0c0c;"></div>
<div class="a" style="left:12px;top:1767px;width:26px;height:26px;background:#111;border-radius:5px;border:1.5px solid #262626"></div>
<svg style="left:15px;top:1773px" width="20" height="16" viewBox="0 0 20 16"><path d="M0 8 Q10 -2 20 8 Q10 18 0 8 Z" fill="#c0c0c0"/><circle cx="10" cy="8" r="4" fill="#111"/><circle cx="11" cy="7" r="1.3" fill="#c0c0c0"/></svg>
<div class="a" style="left:72px;top:1767px;width:25px;height:26px;background:#111;border-radius:5px;border:1.5px solid #262626"></div>
<div class="a" style="left:102px;top:1767px;width:26px;height:26px;background:#111;border-radius:5px;border:1.5px solid #262626"></div>
<svg style="left:150px;top:1771px" width="10" height="18" viewBox="0 0 10 18"><polyline points="1.5,1.5 9,9.0 1.5,16.5" fill="none" stroke="#b8b8b8" stroke-width="3" stroke-linecap="round" stroke-linejoin="round"/></svg>
<div class="a" style="left:174px;top:1768px;width:24px;height:24px;background:#aaa8cc;"></div>
<div class="t" style="left:216px;top:1770.22px;font-size:21px;color:#bdbdbd;transform:scale(1.0,1.08);transform-origin:0 17.78px;">8</div>
<svg style="left:277px;top:1768px" width="22" height="24" viewBox="0 0 22 24"><path d="M1 1 H15 L21 7 V23 H1 Z" fill="#2a0a00" stroke="#e8892a" stroke-width="1.6"/><text x="4" y="14" font-family="Liberation Sans" font-weight="bold" font-size="11" fill="#f0a030">Ai</text><text x="8" y="21" font-family="Liberation Sans" font-size="5" fill="#f0a030">AI</text></svg>
<div class="t" style="left:312px;top:1770.22px;font-size:21px;color:#bdbdbd;transform:scale(1.0,1.08);transform-origin:0 17.78px;">jambe h<span style="letter-spacing:-1.5px">...</span>nnage_1.ai</div>
<div class="a" style="left:538px;top:1767px;width:26px;height:26px;background:#111;border-radius:5px;border:1.5px solid #262626"></div>
<svg style="left:539px;top:1770px" width="26" height="20" viewBox="0 0 26 20"><path d="M3 10 Q3 0 13 0 Q23 0 23 10 Z" fill="#bdbdbd"/><circle cx="9.5" cy="6.5" r="2.2" fill="#111"/><circle cx="16.5" cy="6.5" r="2.2" fill="#111"/><rect x="10.5" y="9" width="5" height="10" rx="2.5" fill="#bdbdbd"/><rect x="0" y="13" width="8" height="1.8" fill="#bdbdbd"/><rect x="18" y="13" width="8" height="1.8" fill="#bdbdbd"/></svg>
<div class="a" style="left:568px;top:1767px;width:26px;height:26px;background:#111;border-radius:5px;border:1.5px solid #262626"></div>
<svg style="left:573px;top:1772px" width="16" height="16" viewBox="0 0 16 16"><circle cx="8" cy="8" r="3.5" fill="none" stroke="#c0c0c0" stroke-width="1.8"/><line x1="13.00" y1="8.00" x2="16.00" y2="8.00" stroke="#c0c0c0" stroke-width="1.8"/><line x1="11.54" y1="11.53" x2="13.66" y2="13.65" stroke="#c0c0c0" stroke-width="1.8"/><line x1="8.00" y1="13.00" x2="8.01" y2="16.00" stroke="#c0c0c0" stroke-width="1.8"/><line x1="4.47" y1="11.54" x2="2.35" y2="13.66" stroke="#c0c0c0" stroke-width="1.8"/><line x1="3.00" y1="8.01" x2="0.00" y2="8.01" stroke="#c0c0c0" stroke-width="1.8"/><line x1="4.46" y1="4.47" x2="2.33" y2="2.35" stroke="#c0c0c0" stroke-width="1.8"/><line x1="7.99" y1="3.00" x2="7.98" y2="0.00" stroke="#c0c0c0" stroke-width="1.8"/><line x1="11.53" y1="4.45" x2="13.64" y2="2.33" stroke="#c0c0c0" stroke-width="1.8"/></svg>
<div class="a" style="left:598px;top:1767px;width:26px;height:26px;background:#111;border-radius:5px;border:1.5px solid #262626"></div>
<svg style="left:600px;top:1769px" width="22" height="22" viewBox="0 0 22 22"><line x1="2" y1="20" x2="20" y2="2" stroke="#c0c0c0" stroke-width="2.4" stroke-linecap="round"/></svg>
<div class="a" style="left:688px;top:1767px;width:25px;height:26px;background:#111;border-radius:5px;border:1.5px solid #262626"></div>
<div class="a" style="left:718px;top:1767px;width:26px;height:26px;background:#111;border-radius:5px;border:1.5px solid #262626"></div>
<div class="a" style="left:748px;top:1767px;width:26px;height:26px;background:#111;border-radius:5px;border:1.5px solid #262626"></div>
<svg style="left:819px;top:1768px" width="24" height="24" viewBox="0 0 24 24"><polyline points="11.48,8.02 11.10,8.03 10.72,8.08 10.33,8.18 9.96,8.34 9.59,8.54 9.25,8.79 8.93,9.09 8.65,9.44 8.41,9.83 8.21,10.25 8.07,10.70 7.97,11.18 7.94,11.67 7.97,12.18 8.06,12.68 8.22,13.18 8.44,13.67 8.73,14.14 9.07,14.57 9.47,14.97 9.93,15.32 10.44,15.61 10.98,15.85 11.56,16.02 12.17,16.12 12.79,16.14 13.43,16.09 14.06,15.96 14.68,15.76 15.28,15.47 15.85,15.10 16.37,14.67 16.85,14.16 17.27,13.60 17.62,12.98 17.90,12.31 18.10,11.60 18.21,10.86 18.23,10.11 18.16,9.35 18.00,8.59 17.74,7.85 17.39,7.13 16.95,6.46 16.43,5.84 15.82,5.27 15.15,4.78 14.41,4.37 13.62,4.05 12.78,3.82 11.92,3.69 11.03,3.67 10.14,3.76 9.26,3.96 8.39,4.26 7.57,4.67 6.78,5.19 6.06,5.80 5.41,6.50 4.85,7.28 4.37,8.13 4.01,9.05 3.75,10.01 3.60,11.00 3.58,12.02 3.68,13.04 3.91,14.05 4.26,15.04 4.73,15.98 5.31,16.87 6.01,17.69 6.80,18.43 7.69,19.08 8.66,19.61 9.69,20.03 10.78,20.33 11.90,20.49 13.05,20.52 14.20,20.40 15.34,20.15 16.45,19.76 17.51,19.24 18.51,18.58 19.44,17.80 20.26,16.91 20.99,15.92 21.59,14.84 22.06,13.69 22.39,12.48 22.58,11.22 22.61,9.95 22.49,8.67 22.22,7.40 21.79,6.16 21.21,4.98" fill="none" stroke="#bdbdbd" stroke-width="2" stroke-linecap="round"/></svg>
<div class="a" style="left:856px;top:1767px;width:178px;height:27px;background:#0e0e0e;border-radius:8px"></div>
<div class="t" style="left:872px;top:1770.22px;font-size:21px;color:#d0d0d0;width:116px;overflow:hidden">6. corps/per</div>
<svg style="left:998px;top:1775px" width="20" height="11" viewBox="0 0 20 11"><polyline points="1.5,1.5 10.0,10 18.5,1.5" fill="none" stroke="#c8c8c8" stroke-width="3" stroke-linecap="round" stroke-linejoin="round"/></svg>
<div class="a" style="left:4px;top:1798px;width:1070px;height:32px;background:#2e2e2e;"></div>
<div class="a" style="left:1076px;top:1798px;width:14px;height:32px;background:#333;"></div>
<div class="a" style="left:1090px;top:1798px;width:2314px;height:32px;background:#6c6b7c;border-top:1px solid rgba(255,255,255,0.08);border-bottom:1px solid rgba(0,0,0,0.25)"></div>
<div class="a" style="left:3404px;top:1798px;width:14px;height:32px;background:#303030;"></div>
<div class="a" style="left:4px;top:1830px;width:3414px;height:2px;background:#0c0c0c;"></div>
<div class="a" style="left:12px;top:1801px;width:26px;height:26px;background:#111;border-radius:5px;border:1.5px solid #262626"></div>
<svg style="left:15px;top:1807px" width="20" height="16" viewBox="0 0 20 16"><path d="M0 8 Q10 -2 20 8 Q10 18 0 8 Z" fill="#c0c0c0"/><circle cx="10" cy="8" r="4" fill="#111"/><circle cx="11" cy="7" r="1.3" fill="#c0c0c0"/></svg>
<div class="a" style="left:72px;top:1801px;width:25px;height:26px;background:#111;border-radius:5px;border:1.5px solid #262626"></div>
<div class="a" style="left:102px;top:1801px;width:26px;height:26px;background:#111;border-radius:5px;border:1.5px solid #262626"></div>
<svg style="left:150px;top:1805px" width="10" height="18" viewBox="0 0 10 18"><polyline points="1.5,1.5 9,9.0 1.5,16.5" fill="none" stroke="#b8b8b8" stroke-width="3" stroke-linecap="round" stroke-linejoin="round"/></svg>
<div class="a" style="left:174px;top:1802px;width:24px;height:24px;background:#aaa8cc;"></div>
<div class="t" style="left:216px;top:1804.22px;font-size:21px;color:#bdbdbd;transform:scale(1.0,1.08);transform-origin:0 17.78px;">9</div>
<svg style="left:277px;top:1802px" width="22" height="24" viewBox="0 0 22 24"><path d="M1 1 H15 L21 7 V23 H1 Z" fill="#2a0a00" stroke="#e8892a" stroke-width="1.6"/><text x="4" y="14" font-family="Liberation Sans" font-weight="bold" font-size="11" fill="#f0a030">Ai</text><text x="8" y="21" font-family="Liberation Sans" font-size="5" fill="#f0a030">AI</text></svg>
<div class="t" style="left:312px;top:1804.22px;font-size:21px;color:#bdbdbd;transform:scale(1.0,1.08);transform-origin:0 17.78px;">pied ga<span style="letter-spacing:-1.5px">...</span>onnage_1.ai</div>
<div class="a" style="left:538px;top:1801px;width:26px;height:26px;background:#111;border-radius:5px;border:1.5px solid #262626"></div>
<svg style="left:539px;top:1804px" width="26" height="20" viewBox="0 0 26 20"><path d="M3 10 Q3 0 13 0 Q23 0 23 10 Z" fill="#bdbdbd"/><circle cx="9.5" cy="6.5" r="2.2" fill="#111"/><circle cx="16.5" cy="6.5" r="2.2" fill="#111"/><rect x="10.5" y="9" width="5" height="10" rx="2.5" fill="#bdbdbd"/><rect x="0" y="13" width="8" height="1.8" fill="#bdbdbd"/><rect x="18" y="13" width="8" height="1.8" fill="#bdbdbd"/></svg>
<div class="a" style="left:568px;top:1801px;width:26px;height:26px;background:#111;border-radius:5px;border:1.5px solid #262626"></div>
<div class="a" style="left:598px;top:1801px;width:26px;height:26px;background:#111;border-radius:5px;border:1.5px solid #262626"></div>
<svg style="left:600px;top:1803px" width="22" height="22" viewBox="0 0 22 22"><line x1="2" y1="20" x2="20" y2="2" stroke="#c0c0c0" stroke-width="2.4" stroke-linecap="round"/></svg>
<div class="a" style="left:688px;top:1801px;width:25px;height:26px;background:#111;border-radius:5px;border:1.5px solid #262626"></div>
<div class="a" style="left:718px;top:1801px;width:26px;height:26px;background:#111;border-radius:5px;border:1.5px solid #262626"></div>
<div class="a" style="left:748px;top:1801px;width:26px;height:26px;background:#111;border-radius:5px;border:1.5px solid #262626"></div>
<svg style="left:819px;top:1802px" width="24" height="24" viewBox="0 0 24 24"><polyline points="11.48,8.02 11.10,8.03 10.72,8.08 10.33,8.18 9.96,8.34 9.59,8.54 9.25,8.79 8.93,9.09 8.65,9.44 8.41,9.83 8.21,10.25 8.07,10.70 7.97,11.18 7.94,11.67 7.97,12.18 8.06,12.68 8.22,13.18 8.44,13.67 8.73,14.14 9.07,14.57 9.47,14.97 9.93,15.32 10.44,15.61 10.98,15.85 11.56,16.02 12.17,16.12 12.79,16.14 13.43,16.09 14.06,15.96 14.68,15.76 15.28,15.47 15.85,15.10 16.37,14.67 16.85,14.16 17.27,13.60 17.62,12.98 17.90,12.31 18.10,11.60 18.21,10.86 18.23,10.11 18.16,9.35 18.00,8.59 17.74,7.85 17.39,7.13 16.95,6.46 16.43,5.84 15.82,5.27 15.15,4.78 14.41,4.37 13.62,4.05 12.78,3.82 11.92,3.69 11.03,3.67 10.14,3.76 9.26,3.96 8.39,4.26 7.57,4.67 6.78,5.19 6.06,5.80 5.41,6.50 4.85,7.28 4.37,8.13 4.01,9.05 3.75,10.01 3.60,11.00 3.58,12.02 3.68,13.04 3.91,14.05 4.26,15.04 4.73,15.98 5.31,16.87 6.01,17.69 6.80,18.43 7.69,19.08 8.66,19.61 9.69,20.03 10.78,20.33 11.90,20.49 13.05,20.52 14.20,20.40 15.34,20.15 16.45,19.76 17.51,19.24 18.51,18.58 19.44,17.80 20.26,16.91 20.99,15.92 21.59,14.84 22.06,13.69 22.39,12.48 22.58,11.22 22.61,9.95 22.49,8.67 22.22,7.40 21.79,6.16 21.21,4.98" fill="none" stroke="#bdbdbd" stroke-width="2" stroke-linecap="round"/></svg>
<div class="a" style="left:856px;top:1801px;width:178px;height:27px;background:#0e0e0e;border-radius:8px"></div>
<div class="t" style="left:872px;top:1804.22px;font-size:21px;color:#d0d0d0;width:116px;overflow:hidden">7. Jambe ba</div>
<svg style="left:998px;top:1809px" width="20" height="11" viewBox="0 0 20 11"><polyline points="1.5,1.5 10.0,10 18.5,1.5" fill="none" stroke="#c8c8c8" stroke-width="3" stroke-linecap="round" stroke-linejoin="round"/></svg>
<div class="a" style="left:4px;top:1832px;width:1070px;height:32px;background:#2e2e2e;"></div>
<div class="a" style="left:1076px;top:1832px;width:14px;height:32px;background:#333;"></div>
<div class="a" style="left:1090px;top:1832px;width:2314px;height:32px;background:#6c6b7c;border-top:1px solid rgba(255,255,255,0.08);border-bottom:1px solid rgba(0,0,0,0.25)"></div>
<div class="a" style="left:3404px;top:1832px;width:14px;height:32px;background:#303030;"></div>
<div class="a" style="left:4px;top:1864px;width:3414px;height:2px;background:#0c0c0c;"></div>
<div class="a" style="left:12px;top:1835px;width:26px;height:26px;background:#111;border-radius:5px;border:1.5px solid #262626"></div>
<svg style="left:15px;top:1841px" width="20" height="16" viewBox="0 0 20 16"><path d="M0 8 Q10 -2 20 8 Q10 18 0 8 Z" fill="#c0c0c0"/><circle cx="10" cy="8" r="4" fill="#111"/><circle cx="11" cy="7" r="1.3" fill="#c0c0c0"/></svg>
<div class="a" style="left:72px;top:1835px;width:25px;height:26px;background:#111;border-radius:5px;border:1.5px solid #262626"></div>
<div class="a" style="left:102px;top:1835px;width:26px;height:26px;background:#111;border-radius:5px;border:1.5px solid #262626"></div>
<svg style="left:150px;top:1839px" width="10" height="18" viewBox="0 0 10 18"><polyline points="1.5,1.5 9,9.0 1.5,16.5" fill="none" stroke="#b8b8b8" stroke-width="3" stroke-linecap="round" stroke-linejoin="round"/></svg>
<div class="a" style="left:174px;top:1836px;width:24px;height:24px;background:#aaa8cc;"></div>
<div class="t" style="left:216px;top:1838.22px;font-size:21px;color:#bdbdbd;transform:scale(1.0,1.08);transform-origin:0 17.78px;">10</div>
<svg style="left:277px;top:1836px" width="22" height="24" viewBox="0 0 22 24"><path d="M1 1 H15 L21 7 V23 H1 Z" fill="#2a0a00" stroke="#e8892a" stroke-width="1.6"/><text x="4" y="14" font-family="Liberation Sans" font-weight="bold" font-size="11" fill="#f0a030">Ai</text><text x="8" y="21" font-family="Liberation Sans" font-size="5" fill="#f0a030">AI</text></svg>
<div class="t" style="left:312px;top:1838.22px;font-size:21px;color:#bdbdbd;transform:scale(1.0,1.08);transform-origin:0 17.78px;">bras ga<span style="letter-spacing:-1.5px">...</span>sonnage_1.ai</div>
<div class="a" style="left:538px;top:1835px;width:26px;height:26px;background:#111;border-radius:5px;border:1.5px solid #262626"></div>
<svg style="left:539px;top:1838px" width="26" height="20" viewBox="0 0 26 20"><path d="M3 10 Q3 0 13 0 Q23 0 23 10 Z" fill="#bdbdbd"/><circle cx="9.5" cy="6.5" r="2.2" fill="#111"/><circle cx="16.5" cy="6.5" r="2.2" fill="#111"/><rect x="10.5" y="9" width="5" height="10" rx="2.5" fill="#bdbdbd"/><rect x="0" y="13" width="8" height="1.8" fill="#bdbdbd"/><rect x="18" y="13" width="8" height="1.8" fill="#bdbdbd"/></svg>
<div class="a" style="left:568px;top:1835px;width:26px;height:26px;background:#111;border-radius:5px;border:1.5px solid #262626"></div>
<div class="a" style="left:598px;top:1835px;width:26px;height:26px;background:#111;border-radius:5px;border:1.5px solid #262626"></div>
<svg style="left:600px;top:1837px" width="22" height="22" viewBox="0 0 22 22"><line x1="2" y1="20" x2="20" y2="2" stroke="#c0c0c0" stroke-width="2.4" stroke-linecap="round"/></svg>
<div class="a" style="left:688px;top:1835px;width:25px;height:26px;background:#111;border-radius:5px;border:1.5px solid #262626"></div>
<div class="a" style="left:718px;top:1835px;width:26px;height:26px;background:#111;border-radius:5px;border:1.5px solid #262626"></div>
<div class="a" style="left:748px;top:1835px;width:26px;height:26px;background:#111;border-radius:5px;border:1.5px solid #262626"></div>
<svg style="left:819px;top:1836px" width="24" height="24" viewBox="0 0 24 24"><polyline points="11.48,8.02 11.10,8.03 10.72,8.08 10.33,8.18 9.96,8.34 9.59,8.54 9.25,8.79 8.93,9.09 8.65,9.44 8.41,9.83 8.21,10.25 8.07,10.70 7.97,11.18 7.94,11.67 7.97,12.18 8.06,12.68 8.22,13.18 8.44,13.67 8.73,14.14 9.07,14.57 9.47,14.97 9.93,15.32 10.44,15.61 10.98,15.85 11.56,16.02 12.17,16.12 12.79,16.14 13.43,16.09 14.06,15.96 14.68,15.76 15.28,15.47 15.85,15.10 16.37,14.67 16.85,14.16 17.27,13.60 17.62,12.98 17.90,12.31 18.10,11.60 18.21,10.86 18.23,10.11 18.16,9.35 18.00,8.59 17.74,7.85 17.39,7.13 16.95,6.46 16.43,5.84 15.82,5.27 15.15,4.78 14.41,4.37 13.62,4.05 12.78,3.82 11.92,3.69 11.03,3.67 10.14,3.76 9.26,3.96 8.39,4.26 7.57,4.67 6.78,5.19 6.06,5.80 5.41,6.50 4.85,7.28 4.37,8.13 4.01,9.05 3.75,10.01 3.60,11.00 3.58,12.02 3.68,13.04 3.91,14.05 4.26,15.04 4.73,15.98 5.31,16.87 6.01,17.69 6.80,18.43 7.69,19.08 8.66,19.61 9.69,20.03 10.78,20.33 11.90,20.49 13.05,20.52 14.20,20.40 15.34,20.15 16.45,19.76 17.51,19.24 18.51,18.58 19.44,17.80 20.26,16.91 20.99,15.92 21.59,14.84 22.06,13.69 22.39,12.48 22.58,11.22 22.61,9.95 22.49,8.67 22.22,7.40 21.79,6.16 21.21,4.98" fill="none" stroke="#bdbdbd" stroke-width="2" stroke-linecap="round"/></svg>
<div class="a" style="left:856px;top:1835px;width:178px;height:27px;background:#0e0e0e;border-radius:8px"></div>
<div class="t" style="left:872px;top:1838.22px;font-size:21px;color:#d0d0d0;width:116px;overflow:hidden">6. corps/per</div>
<svg style="left:998px;top:1843px" width="20" height="11" viewBox="0 0 20 11"><polyline points="1.5,1.5 10.0,10 18.5,1.5" fill="none" stroke="#c8c8c8" stroke-width="3" stroke-linecap="round" stroke-linejoin="round"/></svg>
<div class="a" style="left:4px;top:1866px;width:3414px;height:16px;background:#1e1e1e;"></div>
<div class="a" style="left:1108px;top:1456px;width:2.2px;height:426px;background:#5a9cf6;"></div>
<svg style="left:1098px;top:1456px" width="22" height="26" viewBox="0 0 22 26"><path d="M0 0 H22 V12 L11 26 L0 12 Z" fill="#5a9cf0"/><rect x="9" y="12" width="4" height="1.5" fill="#222"/><rect x="10.3" y="12" width="1.5" height="14" fill="#222"/></svg>
<svg style="left:3426px;top:1491px" width="22" height="28" viewBox="0 0 22 28"><path d="M0 0 H22 V19 L11 28 L0 19 Z" fill="#bdbdbd"/></svg>
<svg style="left:3420px;top:1530px" width="29" height="25" viewBox="0 0 29 25"><path d="M16 0 L2 16 H16" fill="none" stroke="#bdbdbd" stroke-width="2"/><rect x="16" y="5" width="13" height="14" fill="#bdbdbd"/><circle cx="13" cy="17" r="5.5" fill="#1e1e1e" stroke="#bdbdbd" stroke-width="2"/></svg>
</body></html>
